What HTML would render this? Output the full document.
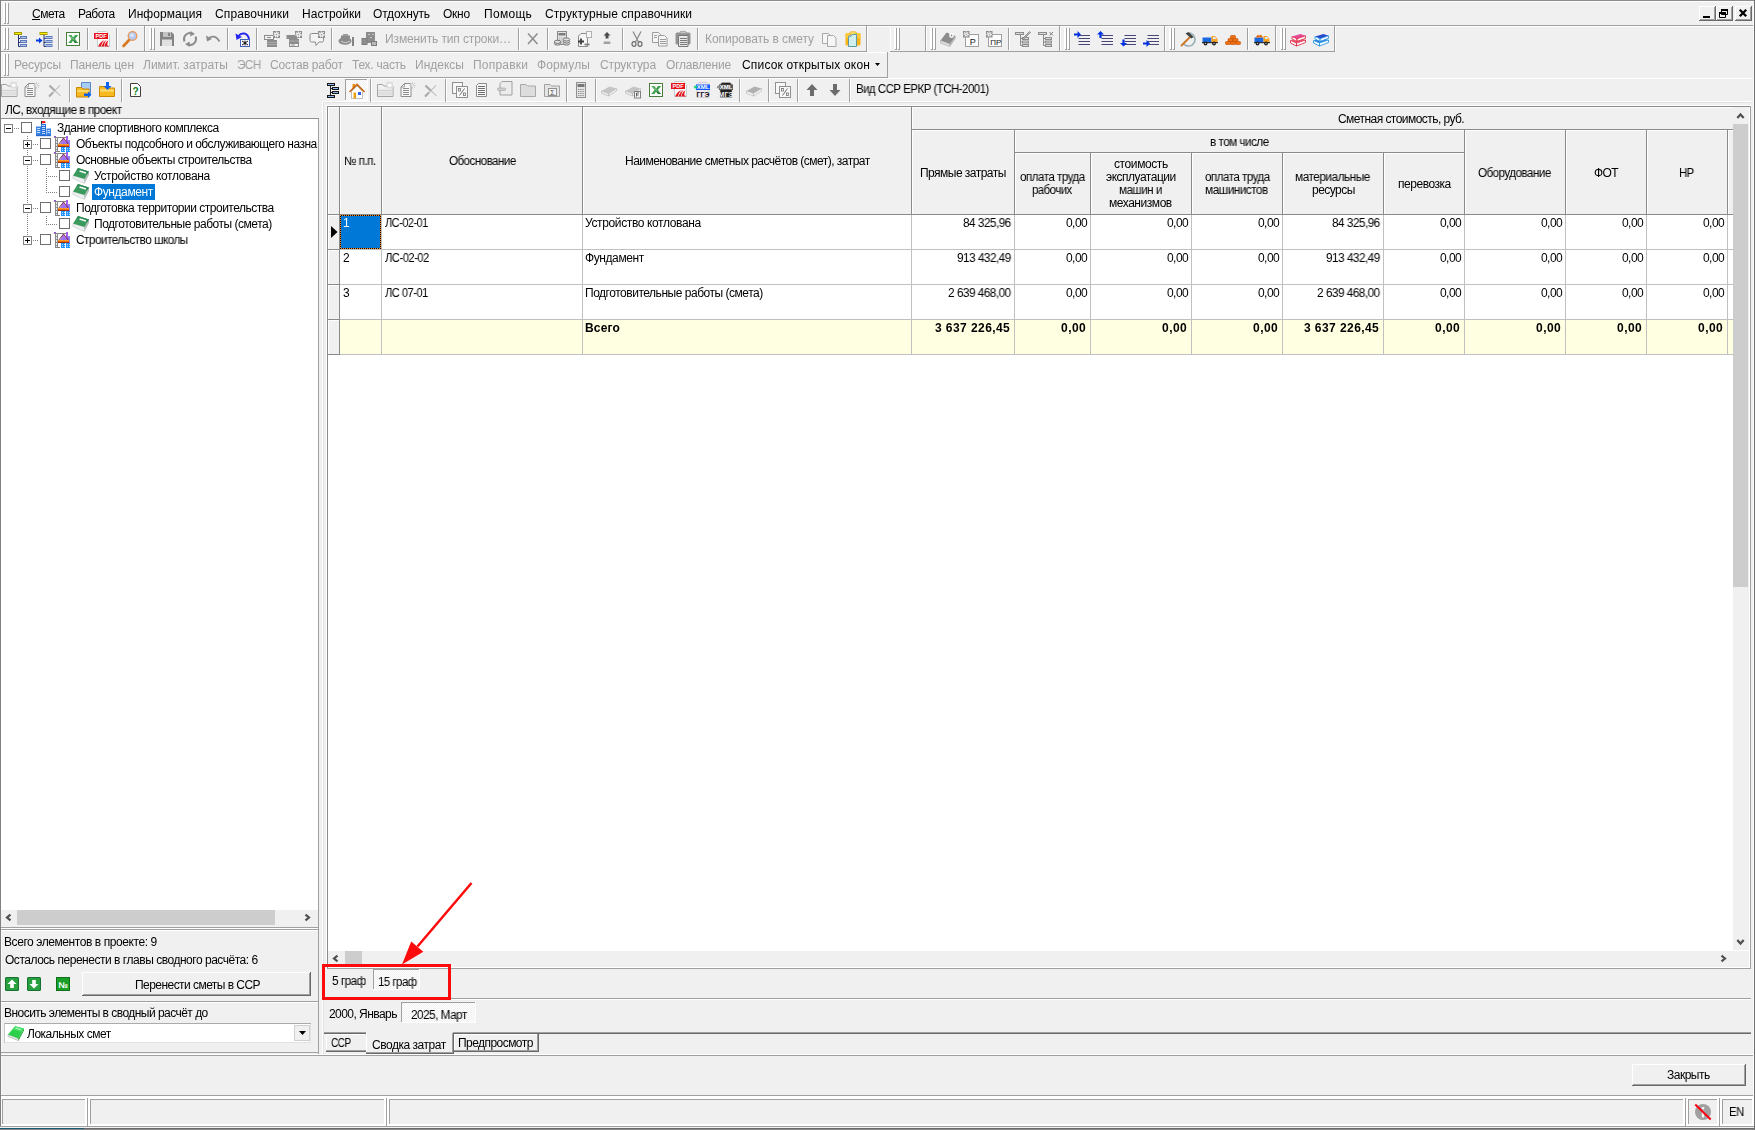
<!DOCTYPE html>
<html lang="ru"><head><meta charset="utf-8"><title>Смета</title>
<style>
html,body{margin:0;padding:0;background:#f0f0f0;}
body{width:1755px;height:1130px;overflow:hidden;position:relative;font-family:"Liberation Sans",sans-serif;font-size:11px;}
#app{position:absolute;left:0;top:0;width:1755px;height:1130px;overflow:hidden;background:#f0f0f0;}
#app div,#app span,#app svg{position:absolute;}
.t{white-space:nowrap;display:block;will-change:transform;}
svg{overflow:visible;}
</style></head><body><div id="app">
<div style="left:0px;top:0px;width:1755px;height:1px;background:#8c8c8c;"></div>
<div style="left:1px;top:1px;width:1752px;height:1px;background:#ffffff;"></div>
<div style="left:0px;top:0px;width:1px;height:1130px;background:#808080;"></div>
<div style="left:1px;top:1px;width:1px;height:1125px;background:#fafafa;"></div>
<div style="left:3px;top:3px;width:2px;height:20px;background:#ffffff;"></div>
<div style="left:5px;top:3px;width:1px;height:21px;background:#a0a0a0;"></div>
<div style="left:4px;top:23px;width:1px;height:1px;background:#a0a0a0;"></div>
<div style="left:6px;top:3px;width:2px;height:20px;background:#ffffff;"></div>
<div style="left:8px;top:3px;width:1px;height:21px;background:#a0a0a0;"></div>
<div style="left:7px;top:23px;width:1px;height:1px;background:#a0a0a0;"></div>
<div style="left:1px;top:25px;width:1752px;height:1px;background:#a0a0a0;"></div>
<span class="t" style="left:32px;top:7px;font-size:12px;line-height:14px;color:#000;letter-spacing:-0.497px;">Смета</span>
<span class="t" style="left:78px;top:7px;font-size:12px;line-height:14px;color:#000;letter-spacing:-0.474px;">Работа</span>
<span class="t" style="left:128px;top:7px;font-size:12px;line-height:14px;color:#000;letter-spacing:0.054px;">Информация</span>
<span class="t" style="left:215px;top:7px;font-size:12px;line-height:14px;color:#000;letter-spacing:0.124px;">Справочники</span>
<span class="t" style="left:302px;top:7px;font-size:12px;line-height:14px;color:#000;letter-spacing:0.018px;">Настройки</span>
<span class="t" style="left:373px;top:7px;font-size:12px;line-height:14px;color:#000;letter-spacing:-0.160px;">Отдохнуть</span>
<span class="t" style="left:443px;top:7px;font-size:12px;line-height:14px;color:#000;letter-spacing:-0.254px;">Окно</span>
<span class="t" style="left:484px;top:7px;font-size:12px;line-height:14px;color:#000;letter-spacing:0.298px;">Помощь</span>
<span class="t" style="left:545px;top:7px;font-size:12px;line-height:14px;color:#000;letter-spacing:0.065px;">Структурные справочники</span>
<div style="left:32px;top:19px;width:8px;height:1px;background:#000;"></div>
<div style="left:1699px;top:6px;width:17px;height:15px;background:#f0f0f0;"></div>
<div style="left:1699px;top:6px;width:17px;height:1px;background:#ffffff;"></div>
<div style="left:1699px;top:6px;width:1px;height:15px;background:#ffffff;"></div>
<div style="left:1699px;top:20px;width:17px;height:1px;background:#696969;"></div>
<div style="left:1715px;top:6px;width:1px;height:15px;background:#696969;"></div>
<div style="left:1700px;top:19px;width:15px;height:1px;background:#a0a0a0;"></div>
<div style="left:1714px;top:7px;width:1px;height:13px;background:#a0a0a0;"></div>
<div style="left:1716px;top:6px;width:17px;height:15px;background:#f0f0f0;"></div>
<div style="left:1716px;top:6px;width:17px;height:1px;background:#ffffff;"></div>
<div style="left:1716px;top:6px;width:1px;height:15px;background:#ffffff;"></div>
<div style="left:1716px;top:20px;width:17px;height:1px;background:#696969;"></div>
<div style="left:1732px;top:6px;width:1px;height:15px;background:#696969;"></div>
<div style="left:1717px;top:19px;width:15px;height:1px;background:#a0a0a0;"></div>
<div style="left:1731px;top:7px;width:1px;height:13px;background:#a0a0a0;"></div>
<div style="left:1735px;top:6px;width:17px;height:15px;background:#f0f0f0;"></div>
<div style="left:1735px;top:6px;width:17px;height:1px;background:#ffffff;"></div>
<div style="left:1735px;top:6px;width:1px;height:15px;background:#ffffff;"></div>
<div style="left:1735px;top:20px;width:17px;height:1px;background:#696969;"></div>
<div style="left:1751px;top:6px;width:1px;height:15px;background:#696969;"></div>
<div style="left:1736px;top:19px;width:15px;height:1px;background:#a0a0a0;"></div>
<div style="left:1750px;top:7px;width:1px;height:13px;background:#a0a0a0;"></div>
<div style="left:1703px;top:16px;width:7px;height:2px;background:#000;"></div>
<svg style="left:1716px;top:6px" width="17" height="15" viewBox="0 0 17 15"><path d="M5.500 4.500h6v4h-6z M3.500 7.500h6v4h-6z" fill="#f0f0f0" stroke="#000" stroke-width="1"/><path d="M5 3h7v2h-7z M3 6h7v2h-7z" fill="#000"/></svg>
<svg style="left:1735px;top:6px" width="17" height="15" viewBox="0 0 17 15"><path d="M4.800 3.800l6.400 6.400m0-6.400l-6.400 6.400" stroke="#000" stroke-width="2.300" fill="none"/></svg>
<div style="left:1px;top:26px;width:1752px;height:1px;background:#ffffff;"></div>
<div style="left:1px;top:51px;width:866px;height:1px;background:#a0a0a0;"></div>
<div style="left:890px;top:51px;width:445px;height:1px;background:#a0a0a0;"></div>
<div style="left:1px;top:52px;width:886px;height:1px;background:#ffffff;"></div>
<div style="left:3px;top:28px;width:2px;height:21px;background:#ffffff;"></div>
<div style="left:5px;top:28px;width:1px;height:22px;background:#a0a0a0;"></div>
<div style="left:4px;top:49px;width:1px;height:1px;background:#a0a0a0;"></div>
<div style="left:6px;top:28px;width:2px;height:21px;background:#ffffff;"></div>
<div style="left:8px;top:28px;width:1px;height:22px;background:#a0a0a0;"></div>
<div style="left:7px;top:49px;width:1px;height:1px;background:#a0a0a0;"></div>
<svg style="left:13px;top:31px" width="16" height="16" viewBox="0 0 16 16"><g transform="translate(0 1)"><rect x="1.5" y="0.5" width="7" height="2" fill="#ffee00" stroke="#a09a00"/><path d="M5.5 3v11.5h2 M5.5 6.5h2 M5.5 10.5h2" stroke="#203070" fill="none"/><rect x="7.5" y="4.5" width="6" height="2" fill="#a8c8f0" stroke="#6078b8"/><rect x="7.5" y="8.5" width="6" height="2" fill="#a8c8f0" stroke="#6078b8"/><rect x="7.5" y="12.5" width="6" height="2" fill="#a8c8f0" stroke="#6078b8"/></g></svg>
<svg style="left:36px;top:31px" width="16" height="16" viewBox="0 0 16 16"><g transform="translate(0 1)"><rect x="4.0" y="0.5" width="7" height="2" fill="#ffee00" stroke="#a09a00"/><path d="M8.0 3v11.5h2 M8.0 6.5h2 M8.0 10.5h2" stroke="#203070" fill="none"/><rect x="10.0" y="4.5" width="6" height="2" fill="#a8c8f0" stroke="#6078b8"/><rect x="10.0" y="8.5" width="6" height="2" fill="#a8c8f0" stroke="#6078b8"/><rect x="10.0" y="12.5" width="6" height="2" fill="#a8c8f0" stroke="#6078b8"/><path d="M0 7.5h3v-2l3.5 3-3.5 3v-2h-3z" fill="#0038e0"/></g></svg>
<div style="left:58px;top:28px;width:1px;height:22px;background:#a0a0a0;"></div>
<div style="left:59px;top:28px;width:1px;height:22px;background:#ffffff;"></div>
<svg style="left:65px;top:31px" width="16" height="16" viewBox="0 0 16 16"><rect x="1.500" y="1.500" width="13" height="13" fill="#fdfffd" stroke="#4a7c3c" stroke-width="1"/><path d="M3.200 4h3.200l1.800 2.500 1.800-2.500h3.200l-3.400 4 3.400 4h-3.200l-1.800-2.500-1.800 2.500h-3.200l3.400-4z" fill="#3fa04c"/><path d="M13.200 4l-3.400 4 3.400 4h-3.200l-1.800-2.500z" fill="#187028"/><path d="M4 4.500l8.500 7" stroke="#a8dcb0" stroke-width=".7"/></svg>
<div style="left:87px;top:28px;width:1px;height:22px;background:#a0a0a0;"></div>
<div style="left:88px;top:28px;width:1px;height:22px;background:#ffffff;"></div>
<svg style="left:94px;top:31px" width="16" height="16" viewBox="0 0 16 16"><path d="M3.5 0.5h9l3 3v12h-12z" fill="#fcfcfc" stroke="#c4d0d0"/><rect x="0" y="2" width="14" height="6" fill="#e8111a"/><text x="7" y="7" font-size="5.5" font-weight="bold" fill="#fff" text-anchor="middle" font-family="Liberation Sans, sans-serif">PDF</text><path d="M4 15.500c1.500-3.500 4-5.500 6.500-6.500c-2 2-3 4-3.500 6.500z M7.500 15.500c1-3.500 3-5.500 5-6.500c-1.500 2-2.300 4-2.500 6.500z M10.500 15.500c.3-3 1.800-5.300 4-6.300c-1 1.800-1.300 3.300-1 5.300 .5.500 1 .500 1.500.300v.700z" fill="#e0141c"/></svg>
<div style="left:116px;top:28px;width:1px;height:22px;background:#a0a0a0;"></div>
<div style="left:117px;top:28px;width:1px;height:22px;background:#ffffff;"></div>
<svg style="left:122px;top:31px" width="16" height="16" viewBox="0 0 16 16"><path d="M7.500 8.500l-6 6.500" stroke="#d87820" stroke-width="2.600" stroke-linecap="round"/><circle cx="10.500" cy="5" r="4.300" fill="#b4c8f2" stroke="#e89858" stroke-width="1.300"/><circle cx="10" cy="4.300" r="2" fill="#d8e4fa"/></svg>
<div style="left:144px;top:26px;width:1px;height:26px;background:#a0a0a0;"></div>
<div style="left:145px;top:26px;width:1px;height:25px;background:#ffffff;"></div>
<div style="left:149px;top:28px;width:2px;height:21px;background:#ffffff;"></div>
<div style="left:151px;top:28px;width:1px;height:22px;background:#a0a0a0;"></div>
<div style="left:150px;top:49px;width:1px;height:1px;background:#a0a0a0;"></div>
<div style="left:152px;top:28px;width:2px;height:21px;background:#ffffff;"></div>
<div style="left:154px;top:28px;width:1px;height:22px;background:#a0a0a0;"></div>
<div style="left:153px;top:49px;width:1px;height:1px;background:#a0a0a0;"></div>
<svg style="left:159px;top:31px" width="16" height="16" viewBox="0 0 16 16"><path d="M1 1h11.500l2.500 2.500v11.500h-14z" fill="#848484"/><rect x="4" y="1" width="8" height="5" fill="#c4c4c4"/><rect x="9" y="1.800" width="2" height="3.200" fill="#848484"/><rect x="3" y="8.500" width="10" height="6.500" fill="#e0e0e0"/></svg>
<svg style="left:182px;top:31px" width="16" height="16" viewBox="0 0 16 16"><path d="M2.500 10.500a6 6 0 0 1 7-8.200" stroke="#8c8c8c" stroke-width="2" fill="none"/><path d="M8.500 0l4.500 3-4.800 2.500z" fill="#8c8c8c"/><path d="M13.500 5.500a6 6 0 0 1-7 8.200" stroke="#8c8c8c" stroke-width="2" fill="none"/><path d="M7.500 16l-4.500-3 4.800-2.500z" fill="#8c8c8c"/></svg>
<svg style="left:205px;top:31px" width="16" height="16" viewBox="0 0 16 16"><path d="M3 8c3-3.500 8-3.500 11.500 2.500" stroke="#8c8c8c" stroke-width="1.800" fill="none"/><path d="M1 4.500l1 6 5-2.500z" fill="#8c8c8c"/></svg>
<div style="left:227px;top:28px;width:1px;height:22px;background:#a0a0a0;"></div>
<div style="left:228px;top:28px;width:1px;height:22px;background:#ffffff;"></div>
<svg style="left:235px;top:31px" width="16" height="16" viewBox="0 0 16 16"><path d="M3.500 5c3-4 9-3.500 10.500 3" stroke="#2828f0" stroke-width="2" fill="none"/><path d="M0.500 2.500l1 6.500 5.500-3z" fill="#2828f0"/><rect x="5.500" y="8.500" width="9" height="7" fill="#fff" stroke="#4060c0"/><path d="M7 10l6 4m0-4l-6 4m3-4.500v5" stroke="#101010" stroke-width="1"/></svg>
<div style="left:256px;top:28px;width:1px;height:22px;background:#a0a0a0;"></div>
<div style="left:257px;top:28px;width:1px;height:22px;background:#ffffff;"></div>
<svg style="left:264px;top:31px" width="16" height="16" viewBox="0 0 16 16"><rect x="0.500" y="4.500" width="9" height="4" fill="#f4f4f4" stroke="#8c8c8c"/><path d="M3 6.500h4" stroke="#8c8c8c"/><rect x="3" y="9" width="10" height="7" fill="#8c8c8c"/><path d="M3 11.500h10 M3 13.500h10" stroke="#b4b4b4" stroke-width=".8"/><rect x="9" y="0" width="7" height="7" fill="#8c8c8c"/><circle cx="12.5" cy="3.5" r="2.300" fill="none" stroke="#fff" stroke-width="1.500" stroke-dasharray="1 .8"/><circle cx="12.5" cy="3.5" r="1.700" fill="#fff"/><circle cx="12.5" cy="3.5" r="0.800" fill="#8c8c8c"/></svg>
<svg style="left:286px;top:31px" width="16" height="16" viewBox="0 0 16 16"><rect x="0.500" y="4" width="11" height="4" fill="#8c8c8c"/><rect x="3" y="8" width="10" height="4" fill="#8c8c8c"/><path d="M3 10h10" stroke="#b4b4b4" stroke-width=".8"/><rect x="3.500" y="12.500" width="9" height="3" fill="#f4f4f4" stroke="#8c8c8c"/><path d="M5 14h4" stroke="#8c8c8c"/><rect x="9" y="0" width="7" height="7" fill="#8c8c8c"/><circle cx="12.5" cy="3.5" r="2.300" fill="none" stroke="#fff" stroke-width="1.500" stroke-dasharray="1 .8"/><circle cx="12.5" cy="3.5" r="1.700" fill="#fff"/><circle cx="12.5" cy="3.5" r="0.800" fill="#8c8c8c"/></svg>
<svg style="left:309px;top:31px" width="16" height="16" viewBox="0 0 16 16"><path d="M2.500 2.500h10.500q1.500 0 1.500 1.500v5.500q0 1.500-1.500 1.500h-3l-3 3.500-.5-3.500h-4q-1.500 0-1.500-1.500v-5.500q0-1.500 1.500-1.500z" fill="#f4f4f4" stroke="#8c8c8c"/><rect x="9" y="0" width="7" height="7" fill="#8c8c8c"/><circle cx="12.5" cy="3.5" r="2.300" fill="none" stroke="#fff" stroke-width="1.500" stroke-dasharray="1 .8"/><circle cx="12.5" cy="3.5" r="1.700" fill="#fff"/><circle cx="12.5" cy="3.5" r="0.800" fill="#8c8c8c"/></svg>
<div style="left:331px;top:28px;width:1px;height:22px;background:#a0a0a0;"></div>
<div style="left:332px;top:28px;width:1px;height:22px;background:#ffffff;"></div>
<svg style="left:338px;top:31px" width="16" height="16" viewBox="0 0 16 16"><ellipse cx="7" cy="10" rx="6.500" ry="3.800" fill="#8c8c8c"/><rect x="3" y="4.500" width="9" height="4" fill="#8c8c8c"/><rect x="5" y="3" width="5" height="2" fill="#9c9c9c"/><path d="M3 10.500q4 2.500 9 0" stroke="#d0d0d0" fill="none"/><path d="M15 6v9" stroke="#3c3c3c" stroke-width="1.200"/></svg>
<svg style="left:361px;top:31px" width="16" height="16" viewBox="0 0 16 16"><rect x="5" y="1" width="9" height="11" fill="#8c8c8c"/><path d="M7 3.500h2m2 0h2M9 6.500h2" stroke="#c4c4c4"/><rect x="0.500" y="7" width="6" height="7" fill="#7c7c7c"/><path d="M2 8v5m1.500-5v5m1.500-5v5" stroke="#a8a8a8" stroke-width=".6"/><rect x="10.500" y="10.500" width="5" height="4" fill="#b8b8b8" stroke="#7c7c7c"/></svg>
<span class="t" style="left:385px;top:32px;font-size:12px;line-height:14px;color:#a0a0a0;letter-spacing:-0.118px;">Изменить тип строки…</span>
<div style="left:518px;top:28px;width:1px;height:22px;background:#a0a0a0;"></div>
<div style="left:519px;top:28px;width:1px;height:22px;background:#ffffff;"></div>
<svg style="left:525px;top:31px" width="16" height="16" viewBox="0 0 16 16"><path d="M3 2.500l9.500 10.500M12.500 2.500l-9.500 10.500" stroke="#8c8c8c" stroke-width="1.500" fill="none"/></svg>
<div style="left:547px;top:28px;width:1px;height:22px;background:#a0a0a0;"></div>
<div style="left:548px;top:28px;width:1px;height:22px;background:#ffffff;"></div>
<svg style="left:554px;top:31px" width="16" height="16" viewBox="0 0 16 16"><rect x="3.500" y="0.500" width="9" height="13" fill="#e4e4e4" stroke="#8c8c8c"/><rect x="4.500" y="2" width="7" height="2.500" fill="#7c7c7c"/><path d="M5 7h6M5 9h6M5 11h6" stroke="#a8a8a8" stroke-dasharray="1.400 .8"/><ellipse cx="3.500" cy="12.500" rx="3.200" ry="1.600" fill="#e4e4e4" stroke="#707070"/><ellipse cx="3.500" cy="10.800" rx="3.200" ry="1.600" fill="#e4e4e4" stroke="#707070"/><ellipse cx="12.500" cy="12.500" rx="3.200" ry="1.600" fill="#e4e4e4" stroke="#707070"/><ellipse cx="12.500" cy="10.500" rx="3.200" ry="1.600" fill="#e4e4e4" stroke="#707070"/><ellipse cx="12.500" cy="8.500" rx="3.200" ry="1.600" fill="#e4e4e4" stroke="#707070"/></svg>
<svg style="left:577px;top:31px" width="16" height="16" viewBox="0 0 16 16"><path d="M4 2.500h6.500v13h-9v-10.500z" fill="#f6f6f6" stroke="#8c8c8c"/><rect x="9.500" y="0.500" width="5" height="6" fill="#f6f6f6" stroke="#b0b0b0"/><path d="M1 10.500h6M4 7.500v6" stroke="#3c3c3c" stroke-width="1.800"/><path d="M7.500 13.500h5" stroke="#7c7c7c" stroke-width="1.800"/></svg>
<svg style="left:599px;top:31px" width="16" height="16" viewBox="0 0 16 16"><path d="M8 1l3.500 3.500-2 0v3h-3v-3h-2z" fill="#4c4c4c"/><rect x="4.500" y="10.500" width="7" height="2.400" rx="1" fill="#a0a0a0"/></svg>
<div style="left:622px;top:28px;width:1px;height:22px;background:#a0a0a0;"></div>
<div style="left:623px;top:28px;width:1px;height:22px;background:#ffffff;"></div>
<svg style="left:629px;top:31px" width="16" height="16" viewBox="0 0 16 16"><path d="M4 0.500l5.500 10.500M12 0.500l-5.500 10.500" stroke="#8c8c8c" stroke-width="1.300" fill="none"/><ellipse cx="5" cy="13" rx="2" ry="2.400" fill="none" stroke="#6c6c6c" stroke-width="1.200"/><ellipse cx="11" cy="13" rx="2" ry="2.400" fill="none" stroke="#6c6c6c" stroke-width="1.200"/></svg>
<svg style="left:652px;top:31px" width="16" height="16" viewBox="0 0 16 16"><path d="M0.500 1.500h6l2 2v8h-8z" fill="#f6f6f6" stroke="#9c9c9c"/><path d="M6.500 4.500h6l2.500 2.500v8h-8.500z" fill="#f6f6f6" stroke="#9c9c9c"/><path d="M8 8.500h5.500M8 10.500h5.500M8 12.500h5.500M2 4.500h3M2 6.500h3" stroke="#9c9c9c" stroke-width="1" shape-rendering="crispEdges"/></svg>
<svg style="left:675px;top:31px" width="16" height="16" viewBox="0 0 16 16"><rect x="0.500" y="1.500" width="15" height="12" rx="1.500" fill="#949494"/><rect x="5" y="0.300" width="6" height="2.400" rx="1" fill="#c4c4c4" stroke="#8c8c8c" stroke-width=".6"/><path d="M3.500 4.500h9.500v11h-9.500z" fill="#e8e8e8" stroke="#787878"/><path d="M5 7.500h6.500M5 9.500h6.500M5 11.500h6.500M5 13.500h6.500" stroke="#787878" stroke-width="1" shape-rendering="crispEdges"/></svg>
<div style="left:697px;top:28px;width:1px;height:22px;background:#a0a0a0;"></div>
<div style="left:698px;top:28px;width:1px;height:22px;background:#ffffff;"></div>
<span class="t" style="left:705px;top:32px;font-size:12px;line-height:14px;color:#a0a0a0;letter-spacing:-0.046px;">Копировать в смету</span>
<svg style="left:822px;top:31px" width="16" height="16" viewBox="0 0 16 16"><path d="M0.500 2.500h6l2 2v8h-8z" fill="#f6f6f6" stroke="#a8a8a8"/><path d="M5.500 4.500h6l2.500 2.500v8.500h-8.500z" fill="#f6f6f6" stroke="#a8a8a8"/></svg>
<svg style="left:845px;top:31px" width="16" height="16" viewBox="0 0 16 16"><rect x="0.500" y="2" width="15" height="12.500" rx="1.500" fill="#f8b418"/><rect x="0.500" y="2" width="15" height="5" rx="1.500" fill="#fcc840"/><ellipse cx="8" cy="2" rx="3.500" ry="1.400" fill="#fce070" stroke="#e0a010" stroke-width=".6"/><path d="M5.500 5.500h-2v10h8v-12h-4z" fill="#d0f0f0" stroke="#6098a0"/><path d="M3.500 5.500l2-2v2z" fill="#fff" stroke="#6098a0" stroke-width=".6"/></svg>
<div style="left:866px;top:26px;width:1px;height:26px;background:#a0a0a0;"></div>
<div style="left:867px;top:26px;width:1px;height:25px;background:#ffffff;"></div>
<div style="left:890px;top:27px;width:1px;height:24px;background:#ffffff;"></div>
<div style="left:894px;top:28px;width:2px;height:21px;background:#ffffff;"></div>
<div style="left:896px;top:28px;width:1px;height:22px;background:#a0a0a0;"></div>
<div style="left:895px;top:49px;width:1px;height:1px;background:#a0a0a0;"></div>
<div style="left:897px;top:28px;width:2px;height:21px;background:#ffffff;"></div>
<div style="left:899px;top:28px;width:1px;height:22px;background:#a0a0a0;"></div>
<div style="left:898px;top:49px;width:1px;height:1px;background:#a0a0a0;"></div>
<div style="left:925px;top:26px;width:1px;height:26px;background:#a0a0a0;"></div>
<div style="left:926px;top:26px;width:1px;height:25px;background:#ffffff;"></div>
<div style="left:930px;top:28px;width:2px;height:21px;background:#ffffff;"></div>
<div style="left:932px;top:28px;width:1px;height:22px;background:#a0a0a0;"></div>
<div style="left:931px;top:49px;width:1px;height:1px;background:#a0a0a0;"></div>
<div style="left:933px;top:28px;width:2px;height:21px;background:#ffffff;"></div>
<div style="left:935px;top:28px;width:1px;height:22px;background:#a0a0a0;"></div>
<div style="left:934px;top:49px;width:1px;height:1px;background:#a0a0a0;"></div>
<svg style="left:940px;top:31px" width="16" height="16" viewBox="0 0 16 16"><path d="M0.500 9.500l6-8 9 3.500-5.500 8z" fill="#8c8c8c"/><path d="M0.500 9.500l9.500 3.500v2.500l-9.500-3.500z" fill="#e0e0e0" stroke="#a0a0a0" stroke-width=".6"/><path d="M10 13l5.500-8v2.500l-5.500 8z" fill="#b0b0b0"/><circle cx="11.500" cy="4.500" r="2.400" fill="#fff"/><circle cx="11.500" cy="4.500" r="0.900" fill="#8c8c8c"/></svg>
<svg style="left:963px;top:31px" width="16" height="16" viewBox="0 0 16 16"><rect x="2.500" y="3.500" width="13" height="12" fill="#fcfcfc" stroke="#a0a0a0"/><rect x="0" y="0" width="6.500" height="6.500" fill="#8c8c8c"/><circle cx="3.200" cy="3.200" r="2" fill="none" stroke="#fff" stroke-width="1.300" stroke-dasharray=".9 .7"/><circle cx="3.200" cy="3.200" r="1.500" fill="#fff"/><circle cx="3.200" cy="3.200" r=".7" fill="#8c8c8c"/><text x="9.800" y="14.200" font-size="9" fill="#202020" text-anchor="middle" font-family="Liberation Sans, sans-serif">Р</text></svg>
<svg style="left:986px;top:31px" width="16" height="16" viewBox="0 0 16 16"><rect x="2.500" y="3.500" width="13" height="12" fill="#fcfcfc" stroke="#a0a0a0"/><rect x="0" y="0" width="6.500" height="6.500" fill="#8c8c8c"/><circle cx="3.200" cy="3.200" r="2" fill="none" stroke="#fff" stroke-width="1.300" stroke-dasharray=".9 .7"/><circle cx="3.200" cy="3.200" r="1.500" fill="#fff"/><circle cx="3.200" cy="3.200" r=".7" fill="#8c8c8c"/><text x="9.800" y="14.200" font-size="8" fill="#202020" text-anchor="middle" font-family="Liberation Sans, sans-serif">ПР</text></svg>
<div style="left:1008px;top:28px;width:1px;height:22px;background:#a0a0a0;"></div>
<div style="left:1009px;top:28px;width:1px;height:22px;background:#ffffff;"></div>
<svg style="left:1015px;top:31px" width="16" height="16" viewBox="0 0 16 16"><rect x="0.500" y="1.500" width="8" height="2" fill="#d8d8d8" stroke="#8c8c8c"/><path d="M5.500 4v10.500h2M5.500 7.500h2M5.500 11h2" stroke="#8c8c8c" fill="none"/><rect x="7.500" y="6.500" width="6" height="2" fill="#d8d8d8" stroke="#8c8c8c"/><rect x="7.500" y="10" width="6" height="2" fill="#d8d8d8" stroke="#8c8c8c"/><rect x="7.500" y="13.500" width="6" height="2" fill="#d8d8d8" stroke="#8c8c8c"/><path d="M9 6l5.500-5.500 1 1-5.500 5.500-1.500.5z" fill="#b4b4b4" stroke="#7c7c7c" stroke-width=".7"/></svg>
<svg style="left:1038px;top:31px" width="16" height="16" viewBox="0 0 16 16"><rect x="0.500" y="1.500" width="8" height="2" fill="#d8d8d8" stroke="#8c8c8c"/><path d="M5.500 4v10.500h2M5.500 7.500h2M5.500 11h2" stroke="#8c8c8c" fill="none"/><rect x="7.500" y="6.500" width="6" height="2" fill="#d8d8d8" stroke="#8c8c8c"/><rect x="7.500" y="10" width="6" height="2" fill="#d8d8d8" stroke="#8c8c8c"/><rect x="7.500" y="13.500" width="6" height="2" fill="#d8d8d8" stroke="#8c8c8c"/><path d="M11.500 1l3.500 3.500m0-3.500l-3.500 3.500" stroke="#7c7c7c" stroke-width="1"/></svg>
<div style="left:1059px;top:26px;width:1px;height:26px;background:#a0a0a0;"></div>
<div style="left:1060px;top:26px;width:1px;height:25px;background:#ffffff;"></div>
<div style="left:1064px;top:28px;width:2px;height:21px;background:#ffffff;"></div>
<div style="left:1066px;top:28px;width:1px;height:22px;background:#a0a0a0;"></div>
<div style="left:1065px;top:49px;width:1px;height:1px;background:#a0a0a0;"></div>
<div style="left:1067px;top:28px;width:2px;height:21px;background:#ffffff;"></div>
<div style="left:1069px;top:28px;width:1px;height:22px;background:#a0a0a0;"></div>
<div style="left:1068px;top:49px;width:1px;height:1px;background:#a0a0a0;"></div>
<svg style="left:1074px;top:31px" width="16" height="16" viewBox="0 0 16 16"><path d="M4.5 4.5H16M4.5 7.5H16M4.5 10.5H16M4.5 13.5H16" stroke="#484878" stroke-width="1"/><path d="M0 3.500h3.500v-2.500l3.500 3.500-3.500 3.500v-2.500h-3.500z" fill="#0030e0" transform="translate(0 -1)"/></svg>
<svg style="left:1097px;top:31px" width="16" height="16" viewBox="0 0 16 16"><path d="M4.5 4.5H16M4.5 7.5H16M4.5 10.5H16M4.5 13.5H16" stroke="#484878" stroke-width="1"/><path d="M3 0l3.500 3.500h-2.400v3.500h-2.200v-3.500h-2.400z" fill="#0030e0" transform="translate(.5 0)"/></svg>
<svg style="left:1120px;top:31px" width="16" height="16" viewBox="0 0 16 16"><path d="M4.5 4.5H16M4.5 7.5H16M4.5 10.5H16M4.5 13.5H16" stroke="#484878" stroke-width="1"/><path d="M3.500 15.500l-3.500-3.500h2.400v-3.500h2.200v3.500h2.400z" fill="#0030e0"/></svg>
<svg style="left:1143px;top:31px" width="16" height="16" viewBox="0 0 16 16"><path d="M4.5 4.5H16M4.5 7.5H16M4.5 10.5H16M4.5 13.5H16" stroke="#484878" stroke-width="1"/><path d="M0 11.500h3.500v-2.500l3.500 3.500-3.500 3.500v-2.500h-3.500z" fill="#0030e0"/></svg>
<div style="left:1164px;top:26px;width:1px;height:26px;background:#a0a0a0;"></div>
<div style="left:1165px;top:26px;width:1px;height:25px;background:#ffffff;"></div>
<div style="left:1169px;top:28px;width:2px;height:21px;background:#ffffff;"></div>
<div style="left:1171px;top:28px;width:1px;height:22px;background:#a0a0a0;"></div>
<div style="left:1170px;top:49px;width:1px;height:1px;background:#a0a0a0;"></div>
<div style="left:1172px;top:28px;width:2px;height:21px;background:#ffffff;"></div>
<div style="left:1174px;top:28px;width:1px;height:22px;background:#a0a0a0;"></div>
<div style="left:1173px;top:49px;width:1px;height:1px;background:#a0a0a0;"></div>
<svg style="left:1180px;top:31px" width="16" height="16" viewBox="0 0 16 16"><path d="M9 2a6.500 6.500 0 1 1-6 10" stroke="#9ab0b8" stroke-width="1.600" fill="none"/><path d="M1.500 14.500l9-9" stroke="#c87828" stroke-width="1.800" stroke-linecap="round"/><path d="M5.500 2.500l3-1.500 5 5-2 1.500z" fill="#404040"/></svg>
<svg style="left:1202px;top:31px" width="16" height="16" viewBox="0 0 16 16"><path d="M0.500 6.500h9v5h-9z" fill="#1868e0"/><path d="M9.500 5h3.500l2.500 3v3.500h-6z" fill="#f8a020"/><path d="M11 6h2l1.500 2h-3.500z" fill="#d8ecff"/><rect x="0" y="11" width="16" height="1.200" fill="#303030"/><circle cx="3.500" cy="12.500" r="1.900" fill="#202020"/><circle cx="12" cy="12.500" r="1.900" fill="#202020"/><circle cx="3.500" cy="12.500" r=".7" fill="#c0c0c0"/><circle cx="12" cy="12.500" r=".7" fill="#c0c0c0"/></svg>
<svg style="left:1225px;top:31px" width="16" height="16" viewBox="0 0 16 16"><rect x="5.5" y="4.5" width="5" height="3" rx=".8" fill="#f07010" stroke="#c04800" stroke-width=".6"/><rect x="3" y="7.5" width="5" height="3" rx=".8" fill="#f07010" stroke="#c04800" stroke-width=".6"/><rect x="8" y="7.5" width="5" height="3" rx=".8" fill="#f07010" stroke="#c04800" stroke-width=".6"/><rect x="0.5" y="10.5" width="5" height="3" rx=".8" fill="#f07010" stroke="#c04800" stroke-width=".6"/><rect x="5.5" y="10.5" width="5" height="3" rx=".8" fill="#f07010" stroke="#c04800" stroke-width=".6"/><rect x="10.5" y="10.5" width="5" height="3" rx=".8" fill="#f07010" stroke="#c04800" stroke-width=".6"/></svg>
<div style="left:1247px;top:28px;width:1px;height:22px;background:#a0a0a0;"></div>
<div style="left:1248px;top:28px;width:1px;height:22px;background:#ffffff;"></div>
<svg style="left:1254px;top:31px" width="16" height="16" viewBox="0 0 16 16"><path d="M0.500 6.500h9v5h-9z" fill="#1868e0"/><path d="M9.500 5h3.500l2.500 3v3.500h-6z" fill="#f8a020"/><path d="M11 6h2l1.500 2h-3.500z" fill="#d8ecff"/><rect x="0" y="11" width="16" height="1.200" fill="#303030"/><circle cx="3.500" cy="12.500" r="1.900" fill="#202020"/><circle cx="12" cy="12.500" r="1.900" fill="#202020"/><circle cx="3.500" cy="12.500" r=".7" fill="#c0c0c0"/><circle cx="12" cy="12.500" r=".7" fill="#c0c0c0"/><path d="M1.500 6.500l2-2.500 2 .5 1.500-1 2 3z" fill="#e86810"/></svg>
<div style="left:1275px;top:26px;width:1px;height:26px;background:#a0a0a0;"></div>
<div style="left:1276px;top:26px;width:1px;height:25px;background:#ffffff;"></div>
<div style="left:1280px;top:28px;width:2px;height:21px;background:#ffffff;"></div>
<div style="left:1282px;top:28px;width:1px;height:22px;background:#a0a0a0;"></div>
<div style="left:1281px;top:49px;width:1px;height:1px;background:#a0a0a0;"></div>
<div style="left:1283px;top:28px;width:2px;height:21px;background:#ffffff;"></div>
<div style="left:1285px;top:28px;width:1px;height:22px;background:#a0a0a0;"></div>
<div style="left:1284px;top:49px;width:1px;height:1px;background:#a0a0a0;"></div>
<svg style="left:1290px;top:31px" width="16" height="16" viewBox="0 0 16 16"><path d="M0.500 9.500l9-2.500 6 2-9 3z" fill="#f06080"/><path d="M0.500 9.500v2.500l6 3v-3z M6.500 12l9-3v2.500l-9 3.500z" fill="#fff" stroke="#e03048" stroke-width=".9"/><path d="M2 5.500l8.500-2.500 5 1.800-8.500 3z" fill="#e84898"/><path d="M2 5.500v2.500l5 2.500v-2.700z M7 7.800l8.500-3v2.500l-8.500 3.200z" fill="#fff" stroke="#e03048" stroke-width=".9"/></svg>
<svg style="left:1313px;top:31px" width="16" height="16" viewBox="0 0 16 16"><path d="M0.500 9.500l9-2.500 6 2-9 3z" fill="#3070e0"/><path d="M0.500 9.500v2.500l6 3v-3z M6.500 12l9-3v2.500l-9 3.500z" fill="#fff" stroke="#2898e0" stroke-width=".9"/><path d="M2 5.500l8.500-2.500 5 1.800-8.500 3z" fill="#2848d0"/><path d="M2 5.500v2.500l5 2.500v-2.700z M7 7.800l8.500-3v2.500l-8.500 3.200z" fill="#fff" stroke="#2898e0" stroke-width=".9"/></svg>
<div style="left:1334px;top:26px;width:1px;height:26px;background:#a0a0a0;"></div>
<div style="left:1335px;top:26px;width:1px;height:25px;background:#ffffff;"></div>
<div style="left:3px;top:54px;width:2px;height:21px;background:#ffffff;"></div>
<div style="left:5px;top:54px;width:1px;height:22px;background:#a0a0a0;"></div>
<div style="left:4px;top:75px;width:1px;height:1px;background:#a0a0a0;"></div>
<div style="left:6px;top:54px;width:2px;height:21px;background:#ffffff;"></div>
<div style="left:8px;top:54px;width:1px;height:22px;background:#a0a0a0;"></div>
<div style="left:7px;top:75px;width:1px;height:1px;background:#a0a0a0;"></div>
<span class="t" style="left:14px;top:58px;font-size:12px;line-height:14px;color:#a0a0a0;letter-spacing:-0.050px;">Ресурсы</span>
<span class="t" style="left:70px;top:58px;font-size:12px;line-height:14px;color:#a0a0a0;letter-spacing:-0.087px;">Панель цен</span>
<span class="t" style="left:143px;top:58px;font-size:12px;line-height:14px;color:#a0a0a0;letter-spacing:0.001px;">Лимит. затраты</span>
<span class="t" style="left:237px;top:58px;font-size:12px;line-height:14px;color:#a0a0a0;letter-spacing:-0.550px;transform:scaleX(0.976);transform-origin:0 0;">ЭСН</span>
<span class="t" style="left:270px;top:58px;font-size:12px;line-height:14px;color:#a0a0a0;letter-spacing:-0.193px;">Состав работ</span>
<span class="t" style="left:352px;top:58px;font-size:12px;line-height:14px;color:#a0a0a0;letter-spacing:-0.255px;">Тех. часть</span>
<span class="t" style="left:415px;top:58px;font-size:12px;line-height:14px;color:#a0a0a0;letter-spacing:0.010px;">Индексы</span>
<span class="t" style="left:473px;top:58px;font-size:12px;line-height:14px;color:#a0a0a0;letter-spacing:0.202px;">Поправки</span>
<span class="t" style="left:537px;top:58px;font-size:12px;line-height:14px;color:#a0a0a0;letter-spacing:0.120px;">Формулы</span>
<span class="t" style="left:600px;top:58px;font-size:12px;line-height:14px;color:#a0a0a0;letter-spacing:-0.110px;">Структура</span>
<span class="t" style="left:666px;top:58px;font-size:12px;line-height:14px;color:#a0a0a0;letter-spacing:-0.201px;">Оглавление</span>
<span class="t" style="left:742px;top:58px;font-size:12px;line-height:14px;color:#000;letter-spacing:0.178px;">Список открытых окон</span>
<svg style="left:875px;top:63px" width="5" height="3" viewBox="0 0 5 3"><path d="M0 0h5l-2.500 3z" fill="#000"/></svg>
<div style="left:887px;top:52px;width:1px;height:26px;background:#a0a0a0;"></div>
<div style="left:1px;top:77px;width:887px;height:1px;background:#a0a0a0;"></div>
<div style="left:1px;top:78px;width:1752px;height:1px;background:#ffffff;"></div>
<svg style="left:1px;top:82px" width="16" height="16" viewBox="0 0 16 16"><path d="M0.500 2.500h5l1.500 1.500h9v10.500h-15.500z" fill="#f0f0f0" stroke="#a4a4a4"/><path d="M1 8.500h14.500" stroke="#d4d4d4" stroke-width="1.500"/><path d="M1 11.500h14.500" stroke="#e0e0e0" stroke-width="4"/><rect x="9.500" y="0" width="6.500" height="6.500" fill="#dcdcdc"/><circle cx="12.700" cy="3.200" r="1.800" fill="#fff"/></svg>
<svg style="left:24px;top:82px" width="16" height="16" viewBox="0 0 16 16"><path d="M4.500 1.500h6.500v13h-10v-9.500z" fill="#f8f8f8" stroke="#8c8c8c"/><path d="M1 5h3.500v-3.500" fill="none" stroke="#8c8c8c" stroke-width=".8"/><path d="M3 6.500h6M3 8.500h6M3 10.500h6M3 12.500h6" stroke="#8c8c8c" stroke-width="1" shape-rendering="crispEdges"/><path d="M12.500 0v7M9 3.500h7M10 1l5 5M15 1l-5 5" stroke="#c8c8c8" stroke-width=".8"/><circle cx="12.500" cy="3.500" r="1.300" fill="#e8e8e8"/></svg>
<svg style="left:47px;top:83px" width="16" height="16" viewBox="0 0 16 16"><path d="M2.500 2.500l11 10.500M13 2.500l-11 11" stroke="#c4c4c4" stroke-width="1.100" fill="none"/><path d="M2.500 2.500l5.500 5.200M2 13.500l4-4" stroke="#a8a8a8" stroke-width="1.900"/></svg>
<div style="left:69px;top:79px;width:1px;height:23px;background:#a0a0a0;"></div>
<div style="left:70px;top:79px;width:1px;height:23px;background:#ffffff;"></div>
<svg style="left:76px;top:82px" width="16" height="16" viewBox="0 0 16 16"><path d="M5.500 0.500h9v11h-9z" fill="#a8ccf4" stroke="#5888c8"/><path d="M0.500 5.500h5l1.500 1.500h6v8h-12.500z" fill="#f8b820" stroke="#c88800"/><path d="M1 9h12" stroke="#fcd868" stroke-width="2"/><path d="M8 11.500h4v-2l3.500 3.200-3.500 3.200v-2h-4z" fill="#1060e8"/></svg>
<svg style="left:99px;top:82px" width="16" height="16" viewBox="0 0 16 16"><path d="M0.500 4.500h5l1.500 1.500h8.500v8.500h-15z" fill="#f8b820" stroke="#c88800"/><path d="M1 8.500h14" stroke="#fcd868" stroke-width="2.500"/><path d="M7 0h3v4h2.500l-4 4-4-4h2.500z" fill="#1060e8"/></svg>
<div style="left:121px;top:79px;width:1px;height:23px;background:#a0a0a0;"></div>
<div style="left:122px;top:79px;width:1px;height:23px;background:#ffffff;"></div>
<svg style="left:127px;top:82px" width="16" height="16" viewBox="0 0 16 16"><path d="M3.500 1.500h7l3 3v10h-10z" fill="#fff" stroke="#404040"/><text x="8.500" y="12.500" font-size="10" font-weight="bold" fill="#108020" text-anchor="middle" font-family="Liberation Sans, sans-serif">?</text></svg>
<span class="t" style="left:5px;top:103px;font-size:12px;line-height:14px;color:#000;letter-spacing:-0.550px;transform:scaleX(0.993);transform-origin:0 0;">ЛС, входящие в проект</span>
<div style="left:1px;top:119px;width:317px;height:808px;background:#ffffff;"></div>
<div style="left:1px;top:118px;width:318px;height:1px;background:#909090;"></div>
<div style="left:318px;top:118px;width:1px;height:811px;background:#a0a0a0;"></div>
<div style="left:1px;top:927px;width:318px;height:1px;background:#a0a0a0;"></div>
<div style="left:1px;top:928px;width:318px;height:1px;background:#ffffff;"></div>
<div style="left:1px;top:929px;width:318px;height:1px;background:#a0a0a0;"></div>
<div style="left:1px;top:930px;width:317px;height:1px;background:#ffffff;"></div>
<div style="left:27px;top:136px;width:1px;height:105px;background:repeating-linear-gradient(180deg,#808080 0 1px,transparent 1px 2px);"></div>
<div style="left:46px;top:168px;width:1px;height:25px;background:repeating-linear-gradient(180deg,#808080 0 1px,transparent 1px 2px);"></div>
<div style="left:46px;top:216px;width:1px;height:9px;background:repeating-linear-gradient(180deg,#808080 0 1px,transparent 1px 2px);"></div>
<div style="left:4px;top:124px;width:9px;height:9px;background:#fff;border:1px solid #808080;box-sizing:border-box;"></div>
<div style="left:6px;top:128px;width:5px;height:1px;background:#000;"></div>
<div style="left:14px;top:128px;width:6px;height:1px;background:repeating-linear-gradient(90deg,#808080 0 1px,transparent 1px 2px);"></div>
<div style="left:21px;top:122px;width:11px;height:11px;background:#fff;border:1px solid #6e6e6e;box-sizing:border-box;"></div>
<svg style="left:36px;top:121px" width="16" height="16" viewBox="0 0 16 16"><path d="M5.500 0v3" stroke="#303030" stroke-width="1"/><path d="M6 0h2.500l1.500 1.300-1.500 1h-2.500z" fill="#f01818"/><rect x="5" y="3" width="5" height="12" fill="#2a70d8"/><rect x="0" y="5.500" width="5" height="9.500" fill="#3c84e4"/><rect x="10.500" y="7.500" width="4.500" height="7.500" fill="#3c84e4"/><path d="M1 7.500h3M1 9.500h3M1 11.500h3M6 4.500h3M6 6.500h3M6 8.500h3M6 10.500h3M6 12.500h3M11.500 9.500h2.500M11.500 11.500h2.500" stroke="#c4dcff" stroke-width="1.200"/><rect x="0" y="13.800" width="15" height="1.400" fill="#2468d0"/></svg>
<span class="t" style="left:57px;top:121px;font-size:12px;line-height:14px;color:#000;letter-spacing:-0.451px;">Здание спортивного комплекса</span>
<div style="left:23px;top:140px;width:9px;height:9px;background:#fff;border:1px solid #808080;box-sizing:border-box;"></div>
<div style="left:25px;top:144px;width:5px;height:1px;background:#000;"></div>
<div style="left:27px;top:142px;width:1px;height:5px;background:#000;"></div>
<div style="left:33px;top:144px;width:6px;height:1px;background:repeating-linear-gradient(90deg,#808080 0 1px,transparent 1px 2px);"></div>
<div style="left:40px;top:138px;width:11px;height:11px;background:#fff;border:1px solid #6e6e6e;box-sizing:border-box;"></div>
<svg style="left:54px;top:136px" width="16" height="16" viewBox="0 0 16 16"><g shape-rendering="crispEdges"><rect x="0" y="1" width="12" height="1" fill="#808080"/><rect x="1" y="1" width="3" height="15" fill="#8a8a8a"/><rect x="2" y="2" width="1" height="2" fill="#f0f0f0"/><rect x="2" y="5" width="1" height="2" fill="#f0f0f0"/><rect x="2" y="8" width="1" height="2" fill="#f0f0f0"/><rect x="2" y="11" width="1" height="2" fill="#f0f0f0"/><rect x="2" y="14" width="1" height="1" fill="#f0f0f0"/><rect x="1" y="15" width="5" height="1" fill="#808080"/><rect x="0" y="0" width="2" height="1" fill="#9050e0"/><rect x="12" y="0" width="2" height="8" fill="#a060f0"/><rect x="14" y="4" width="2" height="8" fill="#9478f4"/></g><path d="M9.500 2l-3.500 6h7z" fill="#a070f0"/><path d="M9.500 2l-5 6.500M9.500 2l5 6.500" stroke="#702020" stroke-width=".9" fill="none"/><g shape-rendering="crispEdges"><rect x="4" y="8" width="11" height="1" fill="#ff9828"/><rect x="4" y="9" width="11" height="1" fill="#f07000"/><rect x="4" y="10" width="11" height="1" fill="#943010"/><rect x="7" y="11" width="4" height="5" fill="#2090ff"/><rect x="12" y="11" width="4" height="5" fill="#2090ff"/><rect x="8" y="12" width="1" height="1" fill="#b0dcff"/><rect x="10" y="12" width="1" height="1" fill="#b0dcff"/><rect x="8" y="14" width="1" height="1" fill="#b0dcff"/><rect x="10" y="14" width="1" height="1" fill="#b0dcff"/><rect x="13" y="12" width="1" height="1" fill="#b0dcff"/><rect x="15" y="12" width="1" height="1" fill="#b0dcff"/><rect x="13" y="14" width="1" height="1" fill="#b0dcff"/><rect x="15" y="14" width="1" height="1" fill="#b0dcff"/></g></svg>
<span class="t" style="left:76px;top:137px;font-size:12px;line-height:14px;color:#000;letter-spacing:-0.508px;">Объекты подсобного и обслуживающего назна</span>
<div style="left:23px;top:156px;width:9px;height:9px;background:#fff;border:1px solid #808080;box-sizing:border-box;"></div>
<div style="left:25px;top:160px;width:5px;height:1px;background:#000;"></div>
<div style="left:33px;top:160px;width:6px;height:1px;background:repeating-linear-gradient(90deg,#808080 0 1px,transparent 1px 2px);"></div>
<div style="left:40px;top:154px;width:11px;height:11px;background:#fff;border:1px solid #6e6e6e;box-sizing:border-box;"></div>
<svg style="left:54px;top:152px" width="16" height="16" viewBox="0 0 16 16"><g shape-rendering="crispEdges"><rect x="0" y="1" width="12" height="1" fill="#808080"/><rect x="1" y="1" width="3" height="15" fill="#8a8a8a"/><rect x="2" y="2" width="1" height="2" fill="#f0f0f0"/><rect x="2" y="5" width="1" height="2" fill="#f0f0f0"/><rect x="2" y="8" width="1" height="2" fill="#f0f0f0"/><rect x="2" y="11" width="1" height="2" fill="#f0f0f0"/><rect x="2" y="14" width="1" height="1" fill="#f0f0f0"/><rect x="1" y="15" width="5" height="1" fill="#808080"/><rect x="0" y="0" width="2" height="1" fill="#9050e0"/><rect x="12" y="0" width="2" height="8" fill="#a060f0"/><rect x="14" y="4" width="2" height="8" fill="#9478f4"/></g><path d="M9.500 2l-3.500 6h7z" fill="#a070f0"/><path d="M9.500 2l-5 6.500M9.500 2l5 6.500" stroke="#702020" stroke-width=".9" fill="none"/><g shape-rendering="crispEdges"><rect x="4" y="8" width="11" height="1" fill="#ff9828"/><rect x="4" y="9" width="11" height="1" fill="#f07000"/><rect x="4" y="10" width="11" height="1" fill="#943010"/><rect x="7" y="11" width="4" height="5" fill="#2090ff"/><rect x="12" y="11" width="4" height="5" fill="#2090ff"/><rect x="8" y="12" width="1" height="1" fill="#b0dcff"/><rect x="10" y="12" width="1" height="1" fill="#b0dcff"/><rect x="8" y="14" width="1" height="1" fill="#b0dcff"/><rect x="10" y="14" width="1" height="1" fill="#b0dcff"/><rect x="13" y="12" width="1" height="1" fill="#b0dcff"/><rect x="15" y="12" width="1" height="1" fill="#b0dcff"/><rect x="13" y="14" width="1" height="1" fill="#b0dcff"/><rect x="15" y="14" width="1" height="1" fill="#b0dcff"/></g></svg>
<span class="t" style="left:76px;top:153px;font-size:12px;line-height:14px;color:#000;letter-spacing:-0.518px;">Основные объекты строительства</span>
<div style="left:48px;top:176px;width:10px;height:1px;background:repeating-linear-gradient(90deg,#808080 0 1px,transparent 1px 2px);"></div>
<div style="left:59px;top:170px;width:11px;height:11px;background:#fff;border:1px solid #6e6e6e;box-sizing:border-box;"></div>
<svg style="left:73px;top:168px" width="16" height="16" viewBox="0 0 16 16"><path d="M0 7.500l11.500 3.500v4.500l-11.500-5z" fill="#eef0f0" stroke="#b4bcbc" stroke-width=".5"/><path d="M11.500 11l4.500-7.500v3.500l-4.500 8.500z" fill="#b4bcbc"/><path d="M5 0l11 3.500-4.500 7.500-11.500-3.500z" fill="#3a9a5c"/><path d="M5 0l11 3.500-1.500 2.500-11-3.500z" fill="#2e8b57"/><path d="M6.500 3l6.500 2" stroke="#f0fff4" stroke-width="1.600"/></svg>
<span class="t" style="left:94px;top:169px;font-size:12px;line-height:14px;color:#000;letter-spacing:-0.368px;">Устройство котлована</span>
<div style="left:48px;top:192px;width:10px;height:1px;background:repeating-linear-gradient(90deg,#808080 0 1px,transparent 1px 2px);"></div>
<div style="left:59px;top:186px;width:11px;height:11px;background:#fff;border:1px solid #6e6e6e;box-sizing:border-box;"></div>
<svg style="left:73px;top:184px" width="16" height="16" viewBox="0 0 16 16"><path d="M0 7.500l11.500 3.500v4.500l-11.500-5z" fill="#eef0f0" stroke="#b4bcbc" stroke-width=".5"/><path d="M11.500 11l4.500-7.500v3.500l-4.500 8.500z" fill="#b4bcbc"/><path d="M5 0l11 3.500-4.500 7.500-11.500-3.500z" fill="#3a9a5c"/><path d="M5 0l11 3.500-1.500 2.500-11-3.500z" fill="#2e8b57"/><path d="M6.500 3l6.500 2" stroke="#f0fff4" stroke-width="1.600"/></svg>
<div style="left:92px;top:184px;width:63px;height:16px;background:#0078d7;"></div>
<span class="t" style="left:94px;top:185px;font-size:12px;line-height:14px;color:#fff;letter-spacing:-0.410px;">Фундамент</span>
<div style="left:23px;top:204px;width:9px;height:9px;background:#fff;border:1px solid #808080;box-sizing:border-box;"></div>
<div style="left:25px;top:208px;width:5px;height:1px;background:#000;"></div>
<div style="left:33px;top:208px;width:6px;height:1px;background:repeating-linear-gradient(90deg,#808080 0 1px,transparent 1px 2px);"></div>
<div style="left:40px;top:202px;width:11px;height:11px;background:#fff;border:1px solid #6e6e6e;box-sizing:border-box;"></div>
<svg style="left:54px;top:200px" width="16" height="16" viewBox="0 0 16 16"><g shape-rendering="crispEdges"><rect x="0" y="1" width="12" height="1" fill="#808080"/><rect x="1" y="1" width="3" height="15" fill="#8a8a8a"/><rect x="2" y="2" width="1" height="2" fill="#f0f0f0"/><rect x="2" y="5" width="1" height="2" fill="#f0f0f0"/><rect x="2" y="8" width="1" height="2" fill="#f0f0f0"/><rect x="2" y="11" width="1" height="2" fill="#f0f0f0"/><rect x="2" y="14" width="1" height="1" fill="#f0f0f0"/><rect x="1" y="15" width="5" height="1" fill="#808080"/><rect x="0" y="0" width="2" height="1" fill="#9050e0"/><rect x="12" y="0" width="2" height="8" fill="#a060f0"/><rect x="14" y="4" width="2" height="8" fill="#9478f4"/></g><path d="M9.500 2l-3.500 6h7z" fill="#a070f0"/><path d="M9.500 2l-5 6.500M9.500 2l5 6.500" stroke="#702020" stroke-width=".9" fill="none"/><g shape-rendering="crispEdges"><rect x="4" y="8" width="11" height="1" fill="#ff9828"/><rect x="4" y="9" width="11" height="1" fill="#f07000"/><rect x="4" y="10" width="11" height="1" fill="#943010"/><rect x="7" y="11" width="4" height="5" fill="#2090ff"/><rect x="12" y="11" width="4" height="5" fill="#2090ff"/><rect x="8" y="12" width="1" height="1" fill="#b0dcff"/><rect x="10" y="12" width="1" height="1" fill="#b0dcff"/><rect x="8" y="14" width="1" height="1" fill="#b0dcff"/><rect x="10" y="14" width="1" height="1" fill="#b0dcff"/><rect x="13" y="12" width="1" height="1" fill="#b0dcff"/><rect x="15" y="12" width="1" height="1" fill="#b0dcff"/><rect x="13" y="14" width="1" height="1" fill="#b0dcff"/><rect x="15" y="14" width="1" height="1" fill="#b0dcff"/></g></svg>
<span class="t" style="left:76px;top:201px;font-size:12px;line-height:14px;color:#000;letter-spacing:-0.489px;">Подготовка территории строительства</span>
<div style="left:48px;top:224px;width:10px;height:1px;background:repeating-linear-gradient(90deg,#808080 0 1px,transparent 1px 2px);"></div>
<div style="left:59px;top:218px;width:11px;height:11px;background:#fff;border:1px solid #6e6e6e;box-sizing:border-box;"></div>
<svg style="left:73px;top:216px" width="16" height="16" viewBox="0 0 16 16"><path d="M0 7.500l11.500 3.500v4.500l-11.500-5z" fill="#eef0f0" stroke="#b4bcbc" stroke-width=".5"/><path d="M11.500 11l4.500-7.500v3.500l-4.500 8.500z" fill="#b4bcbc"/><path d="M5 0l11 3.500-4.500 7.500-11.500-3.500z" fill="#3a9a5c"/><path d="M5 0l11 3.500-1.500 2.500-11-3.500z" fill="#2e8b57"/><path d="M6.500 3l6.500 2" stroke="#f0fff4" stroke-width="1.600"/></svg>
<span class="t" style="left:94px;top:217px;font-size:12px;line-height:14px;color:#000;letter-spacing:-0.474px;">Подготовительные работы (смета)</span>
<div style="left:23px;top:236px;width:9px;height:9px;background:#fff;border:1px solid #808080;box-sizing:border-box;"></div>
<div style="left:25px;top:240px;width:5px;height:1px;background:#000;"></div>
<div style="left:27px;top:238px;width:1px;height:5px;background:#000;"></div>
<div style="left:33px;top:240px;width:6px;height:1px;background:repeating-linear-gradient(90deg,#808080 0 1px,transparent 1px 2px);"></div>
<div style="left:40px;top:234px;width:11px;height:11px;background:#fff;border:1px solid #6e6e6e;box-sizing:border-box;"></div>
<svg style="left:54px;top:232px" width="16" height="16" viewBox="0 0 16 16"><g shape-rendering="crispEdges"><rect x="0" y="1" width="12" height="1" fill="#808080"/><rect x="1" y="1" width="3" height="15" fill="#8a8a8a"/><rect x="2" y="2" width="1" height="2" fill="#f0f0f0"/><rect x="2" y="5" width="1" height="2" fill="#f0f0f0"/><rect x="2" y="8" width="1" height="2" fill="#f0f0f0"/><rect x="2" y="11" width="1" height="2" fill="#f0f0f0"/><rect x="2" y="14" width="1" height="1" fill="#f0f0f0"/><rect x="1" y="15" width="5" height="1" fill="#808080"/><rect x="0" y="0" width="2" height="1" fill="#9050e0"/><rect x="12" y="0" width="2" height="8" fill="#a060f0"/><rect x="14" y="4" width="2" height="8" fill="#9478f4"/></g><path d="M9.500 2l-3.500 6h7z" fill="#a070f0"/><path d="M9.500 2l-5 6.500M9.500 2l5 6.500" stroke="#702020" stroke-width=".9" fill="none"/><g shape-rendering="crispEdges"><rect x="4" y="8" width="11" height="1" fill="#ff9828"/><rect x="4" y="9" width="11" height="1" fill="#f07000"/><rect x="4" y="10" width="11" height="1" fill="#943010"/><rect x="7" y="11" width="4" height="5" fill="#2090ff"/><rect x="12" y="11" width="4" height="5" fill="#2090ff"/><rect x="8" y="12" width="1" height="1" fill="#b0dcff"/><rect x="10" y="12" width="1" height="1" fill="#b0dcff"/><rect x="8" y="14" width="1" height="1" fill="#b0dcff"/><rect x="10" y="14" width="1" height="1" fill="#b0dcff"/><rect x="13" y="12" width="1" height="1" fill="#b0dcff"/><rect x="15" y="12" width="1" height="1" fill="#b0dcff"/><rect x="13" y="14" width="1" height="1" fill="#b0dcff"/><rect x="15" y="14" width="1" height="1" fill="#b0dcff"/></g></svg>
<span class="t" style="left:76px;top:233px;font-size:12px;line-height:14px;color:#000;letter-spacing:-0.550px;transform:scaleX(0.985);transform-origin:0 0;">Строительство школы</span>
<div style="left:318px;top:118px;width:1px;height:811px;background:#a0a0a0;"></div>
<div style="left:319px;top:119px;width:4px;height:40px;background:#f0f0f0;"></div>
<div style="left:1px;top:910px;width:317px;height:17px;background:#f0f0f0;"></div>
<div style="left:17px;top:910px;width:258px;height:15px;background:#cdcdcd;"></div>
<svg style="left:4px;top:913px" width="8" height="9" viewBox="0 0 8 9"><path d="M6.500 1.600L3 4.500L6.500 7.400" stroke="#505050" stroke-width="2.200" fill="none"/></svg>
<svg style="left:304px;top:913px" width="8" height="9" viewBox="0 0 8 9"><path d="M1.500 1.600L5 4.500L1.500 7.400" stroke="#505050" stroke-width="2.200" fill="none"/></svg>
<span class="t" style="left:4px;top:935px;font-size:12px;line-height:14px;color:#000;letter-spacing:-0.423px;">Всего элементов в проекте: 9</span>
<span class="t" style="left:5px;top:953px;font-size:12px;line-height:14px;color:#000;letter-spacing:-0.474px;">Осталось перенести в главы сводного расчёта: 6</span>
<svg style="left:5px;top:977px" width="14" height="14" viewBox="0 0 14 14"><rect x="0" y="0" width="14" height="14" rx="1.500" fill="#28a040"/><rect x=".5" y=".5" width="13" height="13" rx="1.500" fill="none" stroke="#187030"/><path d="M7 2.500l4.500 4.500h-2.700v4h-3.600v-4h-2.700z" fill="#fff"/></svg>
<svg style="left:27px;top:977px" width="14" height="14" viewBox="0 0 14 14"><rect x="0" y="0" width="14" height="14" rx="1.500" fill="#28a040"/><rect x=".5" y=".5" width="13" height="13" rx="1.500" fill="none" stroke="#187030"/><path d="M7 11.500l4.500-4.500h-2.700v-4h-3.600v4h-2.700z" fill="#fff"/></svg>
<svg style="left:56px;top:977px" width="14" height="14" viewBox="0 0 14 14"><rect x="0" y="0" width="14" height="14" fill="#18a028"/><rect x=".5" y=".5" width="13" height="13" fill="none" stroke="#107018"/><text x="7" y="10.500" font-size="8.500" font-weight="bold" fill="#fff" text-anchor="middle" font-family="Liberation Sans, sans-serif">№</text></svg>
<div style="left:82px;top:972px;width:229px;height:24px;background:#f0f0f0;"></div>
<div style="left:82px;top:972px;width:229px;height:1px;background:#ffffff;"></div>
<div style="left:82px;top:972px;width:1px;height:24px;background:#ffffff;"></div>
<div style="left:82px;top:995px;width:229px;height:1px;background:#696969;"></div>
<div style="left:310px;top:972px;width:1px;height:24px;background:#696969;"></div>
<div style="left:83px;top:994px;width:227px;height:1px;background:#a0a0a0;"></div>
<div style="left:309px;top:973px;width:1px;height:22px;background:#a0a0a0;"></div>
<span class="t" style="left:135px;top:978px;font-size:12px;line-height:14px;color:#000;letter-spacing:-0.550px;">Перенести сметы в ССР</span>
<div style="left:1px;top:1001px;width:318px;height:1px;background:#a0a0a0;"></div>
<div style="left:1px;top:1002px;width:318px;height:1px;background:#ffffff;"></div>
<span class="t" style="left:4px;top:1006px;font-size:12px;line-height:14px;color:#000;letter-spacing:-0.533px;">Вносить элементы в сводный расчёт до</span>
<div style="left:4px;top:1023px;width:307px;height:20px;background:#fff;border:1px solid #e2e2e2;box-sizing:border-box;"></div>
<div style="left:4px;top:1023px;width:307px;height:1px;background:#ababab;"></div>
<div style="left:4px;top:1023px;width:1px;height:20px;background:#c8c8c8;"></div>
<svg style="left:8px;top:1026px" width="16" height="16" viewBox="0 0 16 16"><path d="M0 8.500l10.500 4v2.200l-10.500-4.200z" fill="#e4ece4" stroke="#8c9c8c" stroke-width=".5"/><path d="M10.500 12.500l5.500-10v1.800l-5.500 10.400z" fill="#1a9a30"/><path d="M7 .3l9 2.200-5.500 10-10.500-4z" fill="#2ccf4a"/><path d="M7 .3l9 2.200-2 3.600-9.500-2.600z" fill="#48e068"/><path d="M7.500 2.200l5.500 1.400" stroke="#a8f4b8" stroke-width="1.200"/></svg>
<span class="t" style="left:27px;top:1027px;font-size:12px;line-height:14px;color:#000;letter-spacing:-0.490px;">Локальных смет</span>
<div style="left:294px;top:1025px;width:16px;height:16px;background:#f0f0f0;border:1px solid #d0d0d0;box-sizing:border-box;"></div>
<svg style="left:299px;top:1031px" width="7" height="4" viewBox="0 0 7 4"><path d="M0 0h7l-3.500 4z" fill="#000"/></svg>
<div style="left:318px;top:930px;width:1px;height:124px;background:#a0a0a0;"></div>
<div style="left:1px;top:1052px;width:318px;height:1px;background:#a0a0a0;"></div>
<div style="left:322px;top:101px;width:1px;height:953px;background:#ffffff;"></div>
<div style="left:322px;top:101px;width:1430px;height:1px;background:#ffffff;"></div>
<div style="left:323px;top:102px;width:1px;height:952px;background:#e3e3e3;"></div>
<div style="left:323px;top:102px;width:1428px;height:1px;background:#e3e3e3;"></div>
<div style="left:326px;top:105px;width:1px;height:864px;background:#ffffff;"></div>
<div style="left:326px;top:105px;width:1425px;height:1px;background:#ffffff;"></div>
<svg style="left:327px;top:82px" width="16" height="16" viewBox="0 0 16 16"><g shape-rendering="crispEdges"><path d="M3.500 4v9M3.500 6.500h2M3.500 10.500h2" stroke="#202020" stroke-width="1" fill="none"/><rect x="0.500" y="1.500" width="7" height="2" fill="#8cb8ec" stroke="#181818"/><rect x="5.500" y="5.500" width="6" height="2" fill="#8cb8ec" stroke="#181818"/><rect x="5.500" y="9.500" width="6" height="2" fill="#8cb8ec" stroke="#181818"/><rect x="0.500" y="13.500" width="7" height="2" fill="#8cb8ec" stroke="#181818"/></g></svg>
<div style="left:345px;top:79px;width:23px;height:22px;background:#f8f8f8;background-image:repeating-conic-gradient(#ffffff 0 25%,#f0f0f0 0 50%);background-size:2px 2px;"></div>
<div style="left:345px;top:79px;width:23px;height:1px;background:#a0a0a0;"></div>
<div style="left:345px;top:79px;width:1px;height:22px;background:#a0a0a0;"></div>
<div style="left:345px;top:100px;width:23px;height:1px;background:#ffffff;"></div>
<div style="left:367px;top:79px;width:1px;height:22px;background:#ffffff;"></div>
<svg style="left:349px;top:83px" width="16" height="16" viewBox="0 0 16 16"><rect x="3.500" y="1" width="2.500" height="5" fill="#f09010"/><path d="M2.500 8.500v7h11v-7l-5.500-5.500z" fill="#fff" stroke="#b0b0b0" stroke-width=".8"/><path d="M0.500 9l7.500-7.500 7.500 7.500" stroke="#c86810" stroke-width="1.600" fill="none"/><rect x="4.500" y="9.500" width="2.500" height="6" fill="#f0a010"/><rect x="9" y="9" width="3" height="3" fill="#3060f0"/></svg>
<div style="left:370px;top:79px;width:1px;height:23px;background:#a0a0a0;"></div>
<div style="left:371px;top:79px;width:1px;height:23px;background:#ffffff;"></div>
<svg style="left:377px;top:82px" width="16" height="16" viewBox="0 0 16 16"><path d="M0.500 2.500h5l1.500 1.500h9v10.500h-15.500z" fill="#f0f0f0" stroke="#a4a4a4"/><path d="M1 8.500h14.500" stroke="#d4d4d4" stroke-width="1.500"/><path d="M1 11.500h14.500" stroke="#e0e0e0" stroke-width="4"/><rect x="9.500" y="0" width="6.500" height="6.500" fill="#dcdcdc"/><circle cx="12.700" cy="3.200" r="1.800" fill="#fff"/></svg>
<svg style="left:400px;top:82px" width="16" height="16" viewBox="0 0 16 16"><path d="M4.500 1.500h6.500v13h-10v-9.500z" fill="#f8f8f8" stroke="#8c8c8c"/><path d="M1 5h3.500v-3.500" fill="none" stroke="#8c8c8c" stroke-width=".8"/><path d="M3 6.500h6M3 8.500h6M3 10.500h6M3 12.500h6" stroke="#8c8c8c" stroke-width="1" shape-rendering="crispEdges"/><path d="M12.500 0v7M9 3.500h7M10 1l5 5M15 1l-5 5" stroke="#c8c8c8" stroke-width=".8"/><circle cx="12.500" cy="3.500" r="1.300" fill="#e8e8e8"/></svg>
<svg style="left:423px;top:83px" width="16" height="16" viewBox="0 0 16 16"><path d="M2.500 2.500l11 10.500M13 2.500l-11 11" stroke="#c4c4c4" stroke-width="1.100" fill="none"/><path d="M2.500 2.500l5.500 5.200M2 13.500l4-4" stroke="#a8a8a8" stroke-width="1.900"/></svg>
<div style="left:445px;top:79px;width:1px;height:23px;background:#a0a0a0;"></div>
<div style="left:446px;top:79px;width:1px;height:23px;background:#ffffff;"></div>
<svg style="left:452px;top:82px" width="16" height="16" viewBox="0 0 16 16"><rect x="0.500" y="0.500" width="10" height="11" fill="#f8f8f8" stroke="#909090"/><rect x="4.500" y="4.500" width="11" height="11" fill="#f8f8f8" stroke="#909090"/><path d="M12.500 6.500l-5 7" stroke="#707070"/><rect x="6.500" y="6.500" width="2" height="2.500" fill="none" stroke="#707070" stroke-width=".8"/><rect x="11.500" y="11" width="2" height="2.500" fill="none" stroke="#707070" stroke-width=".8"/></svg>
<svg style="left:474px;top:82px" width="16" height="16" viewBox="0 0 16 16"><path d="M4.500 1.500h8v13h-10v-11z" fill="#f8f8f8" stroke="#8c8c8c"/><path d="M4 4.500h7M4 6.500h7M4 8.500h7M4 10.500h7M4 12.500h7" stroke="#707070" stroke-width="1" shape-rendering="crispEdges"/></svg>
<svg style="left:497px;top:81px" width="16" height="16" viewBox="0 0 16 16"><path d="M5 0.500h10v13.500h-12v-11.500z" fill="#ececec" stroke="#a0a0a0"/><rect x="0.500" y="7" width="8" height="2.500" rx="1" fill="#d0d0d0" stroke="#a8a8a8" stroke-width=".7"/></svg>
<svg style="left:520px;top:82px" width="16" height="16" viewBox="0 0 16 16"><path d="M0.500 2.500h5.500l1.500 1.500h8v10.500h-15z" fill="#dcdcdc" stroke="#a8a8a8"/></svg>
<svg style="left:544px;top:82px" width="16" height="16" viewBox="0 0 16 16"><path d="M0.500 2.500h5.500l1.500 1.500h8v10.500h-15z" fill="#e4e4e4" stroke="#a0a0a0"/><rect x="4.500" y="6.500" width="8" height="7" fill="#f4f4f4" stroke="#909090"/><text x="8.500" y="12.800" font-size="7" fill="#505050" text-anchor="middle" font-family="Liberation Sans, sans-serif">Σ</text></svg>
<div style="left:566px;top:79px;width:1px;height:23px;background:#a0a0a0;"></div>
<div style="left:567px;top:79px;width:1px;height:23px;background:#ffffff;"></div>
<svg style="left:573px;top:82px" width="16" height="16" viewBox="0 0 16 16"><rect x="3.500" y="0.500" width="9" height="15" fill="#e4e4e4" stroke="#909090"/><rect x="4.500" y="2" width="7" height="3" fill="#787878"/><path d="M5 7.500h6M5 9.500h6M5 11.500h6M5 13.500h6" stroke="#909090" stroke-dasharray="1.400 .8"/></svg>
<div style="left:595px;top:79px;width:1px;height:23px;background:#a0a0a0;"></div>
<div style="left:596px;top:79px;width:1px;height:23px;background:#ffffff;"></div>
<svg style="left:601px;top:83px" width="16" height="16" viewBox="0 0 16 16"><path d="M0.500 8l8-4.500 7 2-8 5z" fill="#c4c4c4"/><path d="M0.500 8l7 2.500v2.500l-7-2.500z" fill="#ececec" stroke="#b0b0b0" stroke-width=".6"/><path d="M7.500 10.500l8-5v2.500l-8 5z" fill="#ececec" stroke="#b0b0b0" stroke-width=".6"/></svg>
<svg style="left:625px;top:83px" width="16" height="16" viewBox="0 0 16 16"><path d="M0.500 8l8-4.500 7 2-8 5z" fill="#c4c4c4"/><path d="M0.500 8l7 2.500v2.500l-7-2.500z" fill="#ececec" stroke="#b0b0b0" stroke-width=".6"/><path d="M7.500 10.500l8-5v2.500l-8 5z" fill="#ececec" stroke="#b0b0b0" stroke-width=".6"/><rect x="9.500" y="8.500" width="6" height="6.500" fill="#f4f4f4" stroke="#808080"/><path d="M11.500 13.500v-3.500h2.500M11.500 12h2" stroke="#505050" stroke-width=".9" fill="none"/></svg>
<svg style="left:648px;top:82px" width="16" height="16" viewBox="0 0 16 16"><rect x="1.500" y="1.500" width="13" height="13" fill="#fdfffd" stroke="#4a7c3c" stroke-width="1"/><path d="M3.200 4h3.200l1.800 2.500 1.800-2.500h3.200l-3.400 4 3.400 4h-3.200l-1.800-2.500-1.800 2.500h-3.200l3.400-4z" fill="#3fa04c"/><path d="M13.200 4l-3.400 4 3.400 4h-3.200l-1.800-2.500z" fill="#187028"/><path d="M4 4.500l8.500 7" stroke="#a8dcb0" stroke-width=".7"/></svg>
<svg style="left:671px;top:81px" width="16" height="16" viewBox="0 0 16 16"><path d="M3.5 0.5h9l3 3v12h-12z" fill="#fcfcfc" stroke="#c4d0d0"/><rect x="0" y="2" width="14" height="6" fill="#e8111a"/><text x="7" y="7" font-size="5.5" font-weight="bold" fill="#fff" text-anchor="middle" font-family="Liberation Sans, sans-serif">PDF</text><path d="M4 15.500c1.500-3.500 4-5.500 6.500-6.500c-2 2-3 4-3.500 6.500z M7.500 15.500c1-3.500 3-5.500 5-6.500c-1.500 2-2.300 4-2.500 6.500z M10.500 15.500c.3-3 1.800-5.300 4-6.300c-1 1.800-1.300 3.300-1 5.300 .5.500 1 .500 1.500.300v.700z" fill="#e0141c"/></svg>
<svg style="left:694px;top:82px" width="16" height="16" viewBox="0 0 16 16"><path d="M5 0.500h8l2 2v13h-12v-13z" fill="#f4e8f4" stroke="#b8b8b8" stroke-width=".6"/><rect x="2" y="2.500" width="14" height="5.500" fill="#0a5cff"/><circle cx="1.500" cy="5" r="1.600" fill="#20d878"/><text x="9.200" y="7.300" font-size="6" font-weight="bold" fill="#fff" text-anchor="middle" font-family="Liberation Sans, sans-serif">XML</text><text x="9" y="14.800" font-size="7" font-weight="bold" fill="#101010" text-anchor="middle" font-family="Liberation Sans, sans-serif">ГГЭ</text></svg>
<svg style="left:717px;top:82px" width="16" height="16" viewBox="0 0 16 16"><path d="M5 0.500h8l2 2v13h-12v-13z" fill="#202020" stroke="#b8b8b8" stroke-width=".6"/><rect x="2" y="2.500" width="14" height="5.500" fill="#585858"/><circle cx="1.500" cy="5" r="1.600" fill="#909090"/><text x="9.200" y="7.300" font-size="6" font-weight="bold" fill="#fff" text-anchor="middle" font-family="Liberation Sans, sans-serif">XML</text><text x="9" y="14.800" font-size="7" font-weight="bold" fill="#f0f0f0" text-anchor="middle" font-family="Liberation Sans, sans-serif">МГЭ</text></svg>
<div style="left:739px;top:79px;width:1px;height:23px;background:#a0a0a0;"></div>
<div style="left:740px;top:79px;width:1px;height:23px;background:#ffffff;"></div>
<svg style="left:746px;top:83px" width="16" height="16" viewBox="0 0 16 16"><path d="M0.500 8l8-4.500 7 2-8 5z" fill="#b0b0b0"/><path d="M0.500 8l7 2.500v2.500l-7-2.500z" fill="#f4f4f4" stroke="#b0b0b0" stroke-width=".6"/><path d="M7.500 10.500l8-5v2.500l-8 5z" fill="#f4f4f4" stroke="#b0b0b0" stroke-width=".6"/></svg>
<div style="left:768px;top:79px;width:1px;height:23px;background:#a0a0a0;"></div>
<div style="left:769px;top:79px;width:1px;height:23px;background:#ffffff;"></div>
<svg style="left:775px;top:82px" width="16" height="16" viewBox="0 0 16 16"><rect x="0.500" y="0.500" width="10" height="11" fill="#f8f8f8" stroke="#909090"/><rect x="4.500" y="4.500" width="11" height="11" fill="#f8f8f8" stroke="#909090"/><path d="M12.500 6.500l-5 7" stroke="#707070"/><rect x="6.500" y="6.500" width="2" height="2.500" fill="none" stroke="#707070" stroke-width=".8"/><rect x="11.500" y="11" width="2" height="2.500" fill="none" stroke="#707070" stroke-width=".8"/></svg>
<div style="left:797px;top:79px;width:1px;height:23px;background:#a0a0a0;"></div>
<div style="left:798px;top:79px;width:1px;height:23px;background:#ffffff;"></div>
<svg style="left:804px;top:82px" width="16" height="16" viewBox="0 0 16 16"><path d="M8 2l5.500 6h-3.500v6h-4v-6h-3.500z" fill="#6c6c6c"/></svg>
<svg style="left:827px;top:82px" width="16" height="16" viewBox="0 0 16 16"><path d="M8 14l5.500-6h-3.500v-6h-4v6h-3.500z" fill="#6c6c6c"/></svg>
<div style="left:849px;top:79px;width:1px;height:23px;background:#a0a0a0;"></div>
<div style="left:850px;top:79px;width:1px;height:23px;background:#ffffff;"></div>
<span class="t" style="left:856px;top:82px;font-size:12px;line-height:14px;color:#000;letter-spacing:-0.550px;transform:scaleX(0.957);transform-origin:0 0;">Вид ССР ЕРКР (ТСН-2001)</span>
<div style="left:328px;top:107px;width:1421px;height:844px;background:#ffffff;"></div>
<div style="left:328px;top:107px;width:1405px;height:107px;background:#f0f0f0;"></div>
<div style="left:328px;top:214px;width:11px;height:140px;background:#f0f0f0;"></div>
<div style="left:340px;top:320px;width:1393px;height:34px;background:#ffffe1;"></div>
<div style="left:340px;top:249px;width:1393px;height:1px;background:#c0c0c0;"></div>
<div style="left:340px;top:284px;width:1393px;height:1px;background:#c0c0c0;"></div>
<div style="left:340px;top:319px;width:1393px;height:1px;background:#c0c0c0;"></div>
<div style="left:340px;top:354px;width:1393px;height:1px;background:#c0c0c0;"></div>
<div style="left:381px;top:215px;width:1px;height:140px;background:#c0c0c0;"></div>
<div style="left:582px;top:215px;width:1px;height:140px;background:#c0c0c0;"></div>
<div style="left:911px;top:215px;width:1px;height:140px;background:#c0c0c0;"></div>
<div style="left:1014px;top:215px;width:1px;height:140px;background:#c0c0c0;"></div>
<div style="left:1090px;top:215px;width:1px;height:140px;background:#c0c0c0;"></div>
<div style="left:1191px;top:215px;width:1px;height:140px;background:#c0c0c0;"></div>
<div style="left:1282px;top:215px;width:1px;height:140px;background:#c0c0c0;"></div>
<div style="left:1383px;top:215px;width:1px;height:140px;background:#c0c0c0;"></div>
<div style="left:1464px;top:215px;width:1px;height:140px;background:#c0c0c0;"></div>
<div style="left:1565px;top:215px;width:1px;height:140px;background:#c0c0c0;"></div>
<div style="left:1646px;top:215px;width:1px;height:140px;background:#c0c0c0;"></div>
<div style="left:1727px;top:215px;width:1px;height:140px;background:#c0c0c0;"></div>
<div style="left:339px;top:107px;width:1px;height:108px;background:#8a8a8a;"></div>
<div style="left:381px;top:107px;width:1px;height:108px;background:#8a8a8a;"></div>
<div style="left:582px;top:107px;width:1px;height:108px;background:#8a8a8a;"></div>
<div style="left:911px;top:107px;width:1px;height:108px;background:#8a8a8a;"></div>
<div style="left:1464px;top:129px;width:1px;height:86px;background:#8a8a8a;"></div>
<div style="left:1565px;top:129px;width:1px;height:86px;background:#8a8a8a;"></div>
<div style="left:1646px;top:129px;width:1px;height:86px;background:#8a8a8a;"></div>
<div style="left:1727px;top:129px;width:1px;height:86px;background:#8a8a8a;"></div>
<div style="left:1014px;top:129px;width:1px;height:86px;background:#8a8a8a;"></div>
<div style="left:1090px;top:152px;width:1px;height:63px;background:#8a8a8a;"></div>
<div style="left:1191px;top:152px;width:1px;height:63px;background:#8a8a8a;"></div>
<div style="left:1282px;top:152px;width:1px;height:63px;background:#8a8a8a;"></div>
<div style="left:1383px;top:152px;width:1px;height:63px;background:#8a8a8a;"></div>
<div style="left:911px;top:129px;width:822px;height:1px;background:#8a8a8a;"></div>
<div style="left:1014px;top:152px;width:450px;height:1px;background:#8a8a8a;"></div>
<div style="left:328px;top:214px;width:1405px;height:1px;background:#8a8a8a;"></div>
<div style="left:339px;top:214px;width:1px;height:141px;background:#8a8a8a;"></div>
<div style="left:328px;top:249px;width:12px;height:1px;background:#8a8a8a;"></div>
<div style="left:328px;top:284px;width:12px;height:1px;background:#8a8a8a;"></div>
<div style="left:328px;top:319px;width:12px;height:1px;background:#8a8a8a;"></div>
<div style="left:328px;top:354px;width:12px;height:1px;background:#8a8a8a;"></div>
<div style="left:328px;top:107px;width:11px;height:1px;background:#ffffff;"></div>
<div style="left:328px;top:107px;width:1px;height:107px;background:#ffffff;"></div>
<div style="left:340px;top:107px;width:41px;height:1px;background:#ffffff;"></div>
<div style="left:340px;top:107px;width:1px;height:107px;background:#ffffff;"></div>
<div style="left:382px;top:107px;width:200px;height:1px;background:#ffffff;"></div>
<div style="left:382px;top:107px;width:1px;height:107px;background:#ffffff;"></div>
<div style="left:583px;top:107px;width:328px;height:1px;background:#ffffff;"></div>
<div style="left:583px;top:107px;width:1px;height:107px;background:#ffffff;"></div>
<div style="left:912px;top:107px;width:821px;height:1px;background:#ffffff;"></div>
<div style="left:912px;top:107px;width:1px;height:22px;background:#ffffff;"></div>
<div style="left:912px;top:130px;width:102px;height:1px;background:#ffffff;"></div>
<div style="left:912px;top:130px;width:1px;height:84px;background:#ffffff;"></div>
<div style="left:1015px;top:130px;width:449px;height:1px;background:#ffffff;"></div>
<div style="left:1015px;top:130px;width:1px;height:22px;background:#ffffff;"></div>
<div style="left:1015px;top:153px;width:75px;height:1px;background:#ffffff;"></div>
<div style="left:1015px;top:153px;width:1px;height:61px;background:#ffffff;"></div>
<div style="left:1091px;top:153px;width:100px;height:1px;background:#ffffff;"></div>
<div style="left:1091px;top:153px;width:1px;height:61px;background:#ffffff;"></div>
<div style="left:1192px;top:153px;width:90px;height:1px;background:#ffffff;"></div>
<div style="left:1192px;top:153px;width:1px;height:61px;background:#ffffff;"></div>
<div style="left:1283px;top:153px;width:100px;height:1px;background:#ffffff;"></div>
<div style="left:1283px;top:153px;width:1px;height:61px;background:#ffffff;"></div>
<div style="left:1384px;top:153px;width:80px;height:1px;background:#ffffff;"></div>
<div style="left:1384px;top:153px;width:1px;height:61px;background:#ffffff;"></div>
<div style="left:1465px;top:130px;width:100px;height:1px;background:#ffffff;"></div>
<div style="left:1465px;top:130px;width:1px;height:84px;background:#ffffff;"></div>
<div style="left:1566px;top:130px;width:80px;height:1px;background:#ffffff;"></div>
<div style="left:1566px;top:130px;width:1px;height:84px;background:#ffffff;"></div>
<div style="left:1647px;top:130px;width:80px;height:1px;background:#ffffff;"></div>
<div style="left:1647px;top:130px;width:1px;height:84px;background:#ffffff;"></div>
<div style="left:1728px;top:130px;width:5px;height:1px;background:#ffffff;"></div>
<div style="left:1728px;top:130px;width:1px;height:84px;background:#ffffff;"></div>
<div style="left:328px;top:215px;width:11px;height:1px;background:#ffffff;"></div>
<div style="left:328px;top:215px;width:1px;height:34px;background:#ffffff;"></div>
<div style="left:328px;top:250px;width:11px;height:1px;background:#ffffff;"></div>
<div style="left:328px;top:250px;width:1px;height:34px;background:#ffffff;"></div>
<div style="left:328px;top:285px;width:11px;height:1px;background:#ffffff;"></div>
<div style="left:328px;top:285px;width:1px;height:34px;background:#ffffff;"></div>
<div style="left:328px;top:320px;width:11px;height:1px;background:#ffffff;"></div>
<div style="left:328px;top:320px;width:1px;height:34px;background:#ffffff;"></div>
<div style="left:327px;top:106px;width:1424px;height:1px;background:#8a8a8a;"></div>
<div style="left:327px;top:106px;width:1px;height:863px;background:#8a8a8a;"></div>
<div style="left:327px;top:968px;width:1424px;height:1px;background:#a0a0a0;"></div>
<div style="left:1750px;top:106px;width:1px;height:863px;background:#a0a0a0;"></div>
<div style="left:328px;top:967px;width:1422px;height:1px;background:#ffffff;"></div>
<div style="left:1749px;top:107px;width:1px;height:861px;background:#ffffff;"></div>
<div style="left:340px;top:215px;width:41px;height:34px;background-image:repeating-conic-gradient(#000000 0 25%,#ff8c1a 0 50%);background-size:2px 2px;"></div>
<div style="left:341px;top:216px;width:39px;height:32px;background:#0078d7;"></div>
<svg style="left:331px;top:226px" width="7" height="12" viewBox="0 0 7 12"><path d="M0 0l6.500 6-6.500 6z" fill="#000"/></svg>
<span class="t" style="left:344px;top:154px;font-size:12px;line-height:14px;color:#000;letter-spacing:-0.550px;transform:scaleX(0.974);transform-origin:0 0;">№ п.п.</span>
<span class="t" style="left:449px;top:154px;font-size:12px;line-height:14px;color:#000;letter-spacing:-0.550px;transform:scaleX(0.966);transform-origin:0 0;">Обоснование</span>
<span class="t" style="left:625px;top:154px;font-size:12px;line-height:14px;color:#000;letter-spacing:-0.522px;">Наименование сметных расчётов (смет), затрат</span>
<span class="t" style="left:1338px;top:112px;font-size:12px;line-height:14px;color:#000;letter-spacing:-0.550px;">Сметная стоимость, руб.</span>
<span class="t" style="left:920px;top:166px;font-size:12px;line-height:14px;color:#000;letter-spacing:-0.531px;">Прямые затраты</span>
<span class="t" style="left:1210px;top:135px;font-size:12px;line-height:14px;color:#000;letter-spacing:-0.550px;transform:scaleX(0.980);transform-origin:0 0;">в том числе</span>
<span class="t" style="left:1020px;top:170px;font-size:12px;line-height:14px;color:#000;letter-spacing:-0.550px;transform:scaleX(0.971);transform-origin:0 0;">оплата труда</span>
<span class="t" style="left:1032px;top:183px;font-size:12px;line-height:14px;color:#000;letter-spacing:-0.550px;transform:scaleX(0.952);transform-origin:0 0;">рабочих</span>
<span class="t" style="left:1114px;top:157px;font-size:12px;line-height:14px;color:#000;letter-spacing:-0.403px;">стоимость</span>
<span class="t" style="left:1106px;top:170px;font-size:12px;line-height:14px;color:#000;letter-spacing:-0.488px;">эксплуатации</span>
<span class="t" style="left:1119px;top:183px;font-size:12px;line-height:14px;color:#000;letter-spacing:-0.550px;transform:scaleX(0.970);transform-origin:0 0;">машин и</span>
<span class="t" style="left:1109px;top:196px;font-size:12px;line-height:14px;color:#000;letter-spacing:-0.457px;">механизмов</span>
<span class="t" style="left:1205px;top:170px;font-size:12px;line-height:14px;color:#000;letter-spacing:-0.550px;transform:scaleX(0.971);transform-origin:0 0;">оплата труда</span>
<span class="t" style="left:1205px;top:183px;font-size:12px;line-height:14px;color:#000;letter-spacing:-0.550px;transform:scaleX(0.988);transform-origin:0 0;">машинистов</span>
<span class="t" style="left:1295px;top:170px;font-size:12px;line-height:14px;color:#000;letter-spacing:-0.550px;transform:scaleX(0.992);transform-origin:0 0;">материальные</span>
<span class="t" style="left:1312px;top:183px;font-size:12px;line-height:14px;color:#000;letter-spacing:-0.541px;">ресурсы</span>
<span class="t" style="left:1398px;top:177px;font-size:12px;line-height:14px;color:#000;letter-spacing:-0.471px;">перевозка</span>
<span class="t" style="left:1478px;top:166px;font-size:12px;line-height:14px;color:#000;letter-spacing:-0.550px;transform:scaleX(0.969);transform-origin:0 0;">Оборудование</span>
<span class="t" style="left:1594px;top:166px;font-size:12px;line-height:14px;color:#000;letter-spacing:-0.550px;transform:scaleX(0.983);transform-origin:0 0;">ФОТ</span>
<span class="t" style="left:1679px;top:166px;font-size:12px;line-height:14px;color:#000;letter-spacing:-0.550px;transform:scaleX(0.947);transform-origin:0 0;">НР</span>
<span class="t" style="left:343px;top:216px;font-size:12px;line-height:14px;color:#fff;">1</span>
<span class="t" style="left:385px;top:216px;font-size:12px;line-height:14px;color:#000;letter-spacing:-0.550px;transform:scaleX(0.913);transform-origin:0 0;">ЛС-02-01</span>
<span class="t" style="left:585px;top:216px;font-size:12px;line-height:14px;color:#000;letter-spacing:-0.368px;">Устройство котлована</span>
<span class="t" style="left:963px;top:216px;font-size:12px;line-height:14px;color:#000;letter-spacing:-0.550px;transform:scaleX(0.985);transform-origin:0 0;">84 325,96</span>
<span class="t" style="left:1066px;top:216px;font-size:12px;line-height:14px;color:#000;letter-spacing:-0.550px;transform:scaleX(0.980);transform-origin:0 0;">0,00</span>
<span class="t" style="left:1167px;top:216px;font-size:12px;line-height:14px;color:#000;letter-spacing:-0.550px;transform:scaleX(0.980);transform-origin:0 0;">0,00</span>
<span class="t" style="left:1258px;top:216px;font-size:12px;line-height:14px;color:#000;letter-spacing:-0.550px;transform:scaleX(0.980);transform-origin:0 0;">0,00</span>
<span class="t" style="left:1332px;top:216px;font-size:12px;line-height:14px;color:#000;letter-spacing:-0.550px;transform:scaleX(0.985);transform-origin:0 0;">84 325,96</span>
<span class="t" style="left:1440px;top:216px;font-size:12px;line-height:14px;color:#000;letter-spacing:-0.550px;transform:scaleX(0.980);transform-origin:0 0;">0,00</span>
<span class="t" style="left:1541px;top:216px;font-size:12px;line-height:14px;color:#000;letter-spacing:-0.550px;transform:scaleX(0.980);transform-origin:0 0;">0,00</span>
<span class="t" style="left:1622px;top:216px;font-size:12px;line-height:14px;color:#000;letter-spacing:-0.550px;transform:scaleX(0.980);transform-origin:0 0;">0,00</span>
<span class="t" style="left:1703px;top:216px;font-size:12px;line-height:14px;color:#000;letter-spacing:-0.550px;transform:scaleX(0.980);transform-origin:0 0;">0,00</span>
<span class="t" style="left:343px;top:251px;font-size:12px;line-height:14px;color:#000;">2</span>
<span class="t" style="left:385px;top:251px;font-size:12px;line-height:14px;color:#000;letter-spacing:-0.550px;transform:scaleX(0.934);transform-origin:0 0;">ЛС-02-02</span>
<span class="t" style="left:585px;top:251px;font-size:12px;line-height:14px;color:#000;letter-spacing:-0.410px;">Фундамент</span>
<span class="t" style="left:957px;top:251px;font-size:12px;line-height:14px;color:#000;letter-spacing:-0.550px;transform:scaleX(0.985);transform-origin:0 0;">913 432,49</span>
<span class="t" style="left:1066px;top:251px;font-size:12px;line-height:14px;color:#000;letter-spacing:-0.550px;transform:scaleX(0.980);transform-origin:0 0;">0,00</span>
<span class="t" style="left:1167px;top:251px;font-size:12px;line-height:14px;color:#000;letter-spacing:-0.550px;transform:scaleX(0.980);transform-origin:0 0;">0,00</span>
<span class="t" style="left:1258px;top:251px;font-size:12px;line-height:14px;color:#000;letter-spacing:-0.550px;transform:scaleX(0.980);transform-origin:0 0;">0,00</span>
<span class="t" style="left:1326px;top:251px;font-size:12px;line-height:14px;color:#000;letter-spacing:-0.550px;transform:scaleX(0.985);transform-origin:0 0;">913 432,49</span>
<span class="t" style="left:1440px;top:251px;font-size:12px;line-height:14px;color:#000;letter-spacing:-0.550px;transform:scaleX(0.980);transform-origin:0 0;">0,00</span>
<span class="t" style="left:1541px;top:251px;font-size:12px;line-height:14px;color:#000;letter-spacing:-0.550px;transform:scaleX(0.980);transform-origin:0 0;">0,00</span>
<span class="t" style="left:1622px;top:251px;font-size:12px;line-height:14px;color:#000;letter-spacing:-0.550px;transform:scaleX(0.980);transform-origin:0 0;">0,00</span>
<span class="t" style="left:1703px;top:251px;font-size:12px;line-height:14px;color:#000;letter-spacing:-0.550px;transform:scaleX(0.980);transform-origin:0 0;">0,00</span>
<span class="t" style="left:343px;top:286px;font-size:12px;line-height:14px;color:#000;">3</span>
<span class="t" style="left:385px;top:286px;font-size:12px;line-height:14px;color:#000;letter-spacing:-0.550px;transform:scaleX(0.926);transform-origin:0 0;">ЛС 07-01</span>
<span class="t" style="left:585px;top:286px;font-size:12px;line-height:14px;color:#000;letter-spacing:-0.474px;">Подготовительные работы (смета)</span>
<span class="t" style="left:948px;top:286px;font-size:12px;line-height:14px;color:#000;letter-spacing:-0.550px;transform:scaleX(0.988);transform-origin:0 0;">2 639 468,00</span>
<span class="t" style="left:1066px;top:286px;font-size:12px;line-height:14px;color:#000;letter-spacing:-0.550px;transform:scaleX(0.980);transform-origin:0 0;">0,00</span>
<span class="t" style="left:1167px;top:286px;font-size:12px;line-height:14px;color:#000;letter-spacing:-0.550px;transform:scaleX(0.980);transform-origin:0 0;">0,00</span>
<span class="t" style="left:1258px;top:286px;font-size:12px;line-height:14px;color:#000;letter-spacing:-0.550px;transform:scaleX(0.980);transform-origin:0 0;">0,00</span>
<span class="t" style="left:1317px;top:286px;font-size:12px;line-height:14px;color:#000;letter-spacing:-0.550px;transform:scaleX(0.988);transform-origin:0 0;">2 639 468,00</span>
<span class="t" style="left:1440px;top:286px;font-size:12px;line-height:14px;color:#000;letter-spacing:-0.550px;transform:scaleX(0.980);transform-origin:0 0;">0,00</span>
<span class="t" style="left:1541px;top:286px;font-size:12px;line-height:14px;color:#000;letter-spacing:-0.550px;transform:scaleX(0.980);transform-origin:0 0;">0,00</span>
<span class="t" style="left:1622px;top:286px;font-size:12px;line-height:14px;color:#000;letter-spacing:-0.550px;transform:scaleX(0.980);transform-origin:0 0;">0,00</span>
<span class="t" style="left:1703px;top:286px;font-size:12px;line-height:14px;color:#000;letter-spacing:-0.550px;transform:scaleX(0.980);transform-origin:0 0;">0,00</span>
<span class="t" style="left:585px;top:321px;font-size:12px;line-height:14px;color:#000;font-weight:bold;letter-spacing:0.181px;">Всего</span>
<span class="t" style="left:935px;top:321px;font-size:12px;line-height:14px;color:#000;font-weight:bold;letter-spacing:0.428px;">3 637 226,45</span>
<span class="t" style="left:1061px;top:321px;font-size:12px;line-height:14px;color:#000;font-weight:bold;letter-spacing:0.469px;">0,00</span>
<span class="t" style="left:1162px;top:321px;font-size:12px;line-height:14px;color:#000;font-weight:bold;letter-spacing:0.469px;">0,00</span>
<span class="t" style="left:1253px;top:321px;font-size:12px;line-height:14px;color:#000;font-weight:bold;letter-spacing:0.469px;">0,00</span>
<span class="t" style="left:1304px;top:321px;font-size:12px;line-height:14px;color:#000;font-weight:bold;letter-spacing:0.428px;">3 637 226,45</span>
<span class="t" style="left:1435px;top:321px;font-size:12px;line-height:14px;color:#000;font-weight:bold;letter-spacing:0.469px;">0,00</span>
<span class="t" style="left:1536px;top:321px;font-size:12px;line-height:14px;color:#000;font-weight:bold;letter-spacing:0.469px;">0,00</span>
<span class="t" style="left:1617px;top:321px;font-size:12px;line-height:14px;color:#000;font-weight:bold;letter-spacing:0.469px;">0,00</span>
<span class="t" style="left:1698px;top:321px;font-size:12px;line-height:14px;color:#000;font-weight:bold;letter-spacing:0.469px;">0,00</span>
<div style="left:1733px;top:107px;width:16px;height:843px;background:#f0f0f0;"></div>
<div style="left:1733px;top:124px;width:15px;height:463px;background:#cdcdcd;"></div>
<svg style="left:1736px;top:112px" width="9" height="8" viewBox="0 0 9 8"><path d="M1.300 6L4.500 2.500L7.700 6" stroke="#505050" stroke-width="2.200" fill="none"/></svg>
<svg style="left:1736px;top:938px" width="9" height="8" viewBox="0 0 9 8"><path d="M1.300 2L4.500 5.500L7.700 2" stroke="#505050" stroke-width="2.200" fill="none"/></svg>
<div style="left:328px;top:951px;width:1421px;height:16px;background:#f0f0f0;"></div>
<div style="left:345px;top:951px;width:17px;height:16px;background:#cdcdcd;"></div>
<svg style="left:331px;top:954px" width="8" height="9" viewBox="0 0 8 9"><path d="M6.500 1.600L3 4.500L6.500 7.400" stroke="#505050" stroke-width="2.200" fill="none"/></svg>
<svg style="left:1720px;top:954px" width="8" height="9" viewBox="0 0 8 9"><path d="M1.500 1.600L5 4.500L1.500 7.400" stroke="#505050" stroke-width="2.200" fill="none"/></svg>
<span class="t" style="left:332px;top:974px;font-size:12px;line-height:14px;color:#000;letter-spacing:-0.550px;transform:scaleX(0.983);transform-origin:0 0;">5 граф</span>
<div style="left:373px;top:969px;width:47px;height:21px;background:#f8f8f8;background-image:repeating-conic-gradient(#ffffff 0 25%,#f0f0f0 0 50%);background-size:2px 2px;"></div>
<div style="left:373px;top:969px;width:47px;height:1px;background:#a0a0a0;"></div>
<div style="left:373px;top:969px;width:1px;height:21px;background:#a0a0a0;"></div>
<div style="left:373px;top:989px;width:47px;height:1px;background:#ffffff;"></div>
<div style="left:419px;top:969px;width:1px;height:21px;background:#ffffff;"></div>
<span class="t" style="left:378px;top:975px;font-size:12px;line-height:14px;color:#000;letter-spacing:-0.550px;transform:scaleX(0.958);transform-origin:0 0;">15 граф</span>
<div style="left:324px;top:998px;width:1427px;height:1px;background:#a0a0a0;"></div>
<div style="left:324px;top:999px;width:1427px;height:1px;background:#ffffff;"></div>
<span class="t" style="left:329px;top:1007px;font-size:12px;line-height:14px;color:#000;letter-spacing:-0.550px;">2000, Январь</span>
<div style="left:401px;top:1002px;width:75px;height:21px;background:#f8f8f8;background-image:repeating-conic-gradient(#ffffff 0 25%,#f0f0f0 0 50%);background-size:2px 2px;"></div>
<div style="left:401px;top:1002px;width:75px;height:1px;background:#a0a0a0;"></div>
<div style="left:401px;top:1002px;width:1px;height:21px;background:#a0a0a0;"></div>
<div style="left:401px;top:1022px;width:75px;height:1px;background:#ffffff;"></div>
<div style="left:475px;top:1002px;width:1px;height:21px;background:#ffffff;"></div>
<span class="t" style="left:411px;top:1008px;font-size:12px;line-height:14px;color:#000;letter-spacing:-0.550px;transform:scaleX(0.985);transform-origin:0 0;">2025, Март</span>
<div style="left:322px;top:964px;width:129px;height:36px;border:3px solid #fd0a0a;box-sizing:border-box;"></div>
<svg style="left:395px;top:875px" width="90" height="100" viewBox="0 0 90 100"><path d="M76.500 8L22.500 71.500" stroke="#fd0a0a" stroke-width="2.500" fill="none"/><path d="M7 89.500l9.200-22.900 12.100 10.200z" fill="#fd0a0a"/></svg>
<div style="left:324px;top:1032px;width:42px;height:1px;background:#a0a0a0;"></div>
<div style="left:324px;top:1033px;width:42px;height:1px;background:#696969;"></div>
<div style="left:453px;top:1032px;width:1298px;height:1px;background:#a0a0a0;"></div>
<div style="left:454px;top:1033px;width:1297px;height:1px;background:#696969;"></div>
<div style="left:326px;top:1034px;width:1px;height:17px;background:#ffffff;"></div>
<div style="left:327px;top:1034px;width:38px;height:1px;background:#ffffff;"></div>
<div style="left:326px;top:1050px;width:40px;height:1px;background:#a0a0a0;"></div>
<div style="left:326px;top:1051px;width:40px;height:1px;background:#696969;"></div>
<span class="t" style="left:331px;top:1036px;font-size:12px;line-height:14px;color:#000;letter-spacing:-0.550px;transform:scaleX(0.834);transform-origin:0 0;">ССР</span>
<div style="left:366px;top:1033px;width:1px;height:20px;background:#ffffff;"></div>
<div style="left:366px;top:1052px;width:87px;height:1px;background:#a0a0a0;"></div>
<div style="left:366px;top:1053px;width:88px;height:1px;background:#696969;"></div>
<div style="left:452px;top:1033px;width:1px;height:20px;background:#a0a0a0;"></div>
<div style="left:453px;top:1033px;width:1px;height:21px;background:#696969;"></div>
<span class="t" style="left:372px;top:1038px;font-size:12px;line-height:14px;color:#000;letter-spacing:-0.466px;">Сводка затрат</span>
<div style="left:454px;top:1034px;width:1px;height:17px;background:#ffffff;"></div>
<div style="left:454px;top:1034px;width:83px;height:1px;background:#ffffff;"></div>
<div style="left:454px;top:1050px;width:84px;height:1px;background:#a0a0a0;"></div>
<div style="left:454px;top:1051px;width:85px;height:1px;background:#696969;"></div>
<div style="left:537px;top:1034px;width:1px;height:17px;background:#a0a0a0;"></div>
<div style="left:538px;top:1034px;width:1px;height:18px;background:#696969;"></div>
<span class="t" style="left:458px;top:1036px;font-size:12px;line-height:14px;color:#000;letter-spacing:-0.550px;">Предпросмотр</span>
<div style="left:1px;top:1054px;width:1752px;height:1px;background:#ffffff;"></div>
<div style="left:1px;top:1055px;width:1752px;height:1px;background:#a0a0a0;"></div>
<div style="left:1632px;top:1064px;width:114px;height:22px;background:#f0f0f0;"></div>
<div style="left:1632px;top:1064px;width:114px;height:1px;background:#ffffff;"></div>
<div style="left:1632px;top:1064px;width:1px;height:22px;background:#ffffff;"></div>
<div style="left:1632px;top:1085px;width:114px;height:1px;background:#696969;"></div>
<div style="left:1745px;top:1064px;width:1px;height:22px;background:#696969;"></div>
<div style="left:1633px;top:1084px;width:112px;height:1px;background:#a0a0a0;"></div>
<div style="left:1744px;top:1065px;width:1px;height:20px;background:#a0a0a0;"></div>
<span class="t" style="left:1667px;top:1068px;font-size:12px;line-height:14px;color:#000;letter-spacing:-0.495px;">Закрыть</span>
<div style="left:1px;top:1095px;width:1752px;height:1px;background:#a0a0a0;"></div>
<div style="left:1px;top:1096px;width:1752px;height:3px;background:#ffffff;"></div>
<div style="left:1px;top:1125px;width:1752px;height:1px;background:#ffffff;"></div>
<div style="left:2px;top:1099px;width:84px;height:1px;background:#a0a0a0;"></div>
<div style="left:2px;top:1099px;width:1px;height:26px;background:#a0a0a0;"></div>
<div style="left:2px;top:1124px;width:84px;height:1px;background:#ffffff;"></div>
<div style="left:85px;top:1099px;width:1px;height:26px;background:#ffffff;"></div>
<div style="left:86px;top:1099px;width:1px;height:27px;background:#ffffff;"></div>
<div style="left:87px;top:1098px;width:1px;height:29px;background:#a0a0a0;"></div>
<div style="left:88px;top:1098px;width:2px;height:28px;background:#ffffff;"></div>
<div style="left:90px;top:1099px;width:295px;height:1px;background:#a0a0a0;"></div>
<div style="left:90px;top:1099px;width:1px;height:26px;background:#a0a0a0;"></div>
<div style="left:90px;top:1124px;width:295px;height:1px;background:#ffffff;"></div>
<div style="left:384px;top:1099px;width:1px;height:26px;background:#ffffff;"></div>
<div style="left:385px;top:1099px;width:1px;height:27px;background:#ffffff;"></div>
<div style="left:386px;top:1098px;width:1px;height:29px;background:#a0a0a0;"></div>
<div style="left:387px;top:1098px;width:2px;height:28px;background:#ffffff;"></div>
<div style="left:389px;top:1099px;width:1295px;height:1px;background:#a0a0a0;"></div>
<div style="left:389px;top:1099px;width:1px;height:26px;background:#a0a0a0;"></div>
<div style="left:389px;top:1124px;width:1295px;height:1px;background:#ffffff;"></div>
<div style="left:1683px;top:1099px;width:1px;height:26px;background:#ffffff;"></div>
<div style="left:1684px;top:1099px;width:1px;height:27px;background:#ffffff;"></div>
<div style="left:1685px;top:1098px;width:1px;height:29px;background:#a0a0a0;"></div>
<div style="left:1686px;top:1098px;width:2px;height:28px;background:#ffffff;"></div>
<div style="left:1688px;top:1099px;width:30px;height:1px;background:#a0a0a0;"></div>
<div style="left:1688px;top:1099px;width:1px;height:26px;background:#a0a0a0;"></div>
<div style="left:1688px;top:1124px;width:30px;height:1px;background:#ffffff;"></div>
<div style="left:1717px;top:1099px;width:1px;height:26px;background:#ffffff;"></div>
<div style="left:1718px;top:1099px;width:1px;height:27px;background:#ffffff;"></div>
<div style="left:1719px;top:1098px;width:1px;height:29px;background:#a0a0a0;"></div>
<div style="left:1720px;top:1098px;width:2px;height:28px;background:#ffffff;"></div>
<div style="left:1722px;top:1099px;width:31px;height:1px;background:#a0a0a0;"></div>
<div style="left:1722px;top:1099px;width:1px;height:26px;background:#a0a0a0;"></div>
<div style="left:1722px;top:1124px;width:31px;height:1px;background:#ffffff;"></div>
<div style="left:1752px;top:1099px;width:1px;height:26px;background:#ffffff;"></div>
<span class="t" style="left:1729px;top:1105px;font-size:12px;line-height:14px;color:#000;letter-spacing:-0.550px;transform:scaleX(0.947);transform-origin:0 0;">EN</span>
<svg style="left:1694px;top:1103px" width="18" height="18" viewBox="0 0 18 18"><circle cx="9" cy="9" r="8" fill="#a0a0a0"/><rect x="7.800" y="8" width="2.400" height="6.500" fill="#f4f4f4"/><rect x="7.800" y="4" width="2.400" height="2.400" fill="#f4f4f4"/><path d="M1.300 1.500l15.400 15" stroke="#ff0010" stroke-width="2"/></svg>
<div style="left:0px;top:1126px;width:1755px;height:1px;background:#a0a0a0;"></div>
<div style="left:0px;top:1127px;width:1755px;height:1px;background:#f0f0f0;"></div>
<div style="left:0px;top:1128px;width:1755px;height:1px;background:#6a6a6a;"></div>
<div style="left:0px;top:1129px;width:1755px;height:1px;background:#8a8a8a;"></div>
<div style="left:0px;top:1128px;width:84px;height:1px;background:#1a5878;"></div>
<div style="left:0px;top:1129px;width:84px;height:1px;background:#8c8884;"></div>
<div style="left:1753px;top:1px;width:1px;height:1053px;background:#f8f8f8;"></div>
<div style="left:1753px;top:1054px;width:1px;height:72px;background:#ffffff;"></div>
<div style="left:1754px;top:0px;width:1px;height:1130px;background:#707070;"></div>
</div></body></html>
